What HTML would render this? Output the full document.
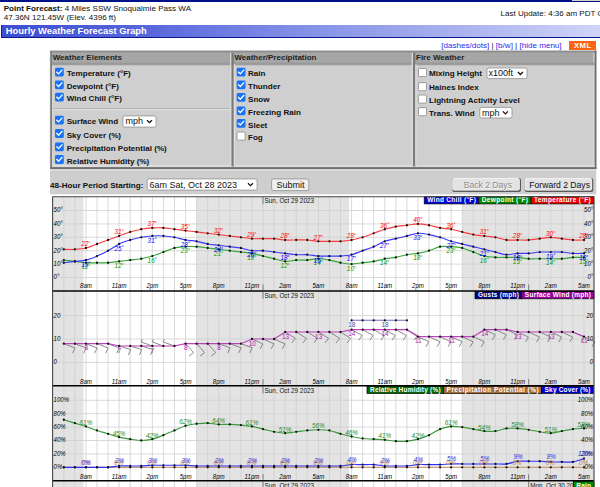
<!DOCTYPE html>
<html><head><meta charset="utf-8"><title>Hourly Weather Forecast Graph</title><style>
html,body{margin:0;padding:0;background:#fff}
body{width:600px;height:487px;overflow:hidden;position:relative;font-family:"Liberation Sans",sans-serif}
.r{position:absolute}
.t{position:absolute;z-index:2;white-space:nowrap;line-height:normal;font-family:"Liberation Sans",sans-serif}
.sel{position:absolute;background:#fff;border:0.8px solid #8a8a8a;border-radius:2px;box-sizing:border-box}
.btn{position:absolute;background:#efefef;border:0.8px solid #8a8a8a;border-radius:2px;box-sizing:border-box}
.btn2{position:absolute;background:#e4e4e4;border-top:1px solid #f6f6f6;border-left:1px solid #f6f6f6;border-right:1.3px solid #5a5a5a;border-bottom:1.5px solid #4a4a4a;border-radius:2px;box-sizing:border-box}
.g{position:absolute;left:0;top:0}
</style></head>
<body>
<div class="r" style="left:0;top:0;width:600px;height:1.8px;background:#001088"></div>
<div class="r" style="left:572px;top:0;width:28px;height:1px;background:#d6d2c8"></div>
<div class="t" style="left:3.7px;top:4.00px;font-size:8.09px;font-weight:normal;color:#111;"><b>Point Forecast:</b> 4 Miles SSW Snoqualmie Pass WA</div>
<div class="t" style="left:3.7px;top:13.00px;font-size:8.07px;font-weight:normal;color:#111;">47.36N 121.45W (Elev. 4396 ft)</div>
<div class="t" style="left:500.6px;top:9.00px;font-size:8px;font-weight:normal;color:#111;white-space:nowrap">Last Update: 4:36 am PDT Oct 28, 2023</div>
<div class="r" style="left:1.2px;top:24.5px;width:598.8px;height:12.6px;background:linear-gradient(90deg,#3d4dd2 0%,#5a68dc 25%,#8390e6 50%,#a8b0ee 75%,#d0d4f8 100%);border-left:1px solid #14209a;border-bottom:1px solid #0a1890"></div>
<div class="t" style="left:5.8px;top:25.00px;font-size:9.4px;font-weight:bold;color:#fff;">Hourly Weather Forecast Graph</div>
<div class="t" style="left:441.3px;top:41.00px;font-size:8.07px;font-weight:normal;color:#222;"><span style="color:#2a2af0">[dashes/dots]</span> | <span style="color:#2a2af0">[b/w]</span> | <span style="color:#2a2af0">[hide menu]</span></div>
<div class="r" style="left:569.2px;top:41px;width:26.8px;height:9.3px;background:#fb6410"></div>
<div class="t" style="left:574.0px;top:41.00px;font-size:7.6px;font-weight:bold;color:#fff;letter-spacing:0.55px">XML</div>
<div class="t" style="left:52.7px;top:53.00px;font-size:8px;font-weight:bold;color:#222;">Weather Elements</div>
<div class="t" style="left:234.4px;top:53.00px;font-size:8px;font-weight:bold;color:#222;">Weather/Precipitation</div>
<div class="t" style="left:416.0px;top:53.00px;font-size:8px;font-weight:bold;color:#222;">Fire Weather</div>

<div class="t" style="left:66.7px;top:69.00px;font-size:8.08px;font-weight:bold;color:#111;">Temperature (°F)</div>

<div class="t" style="left:66.7px;top:82.00px;font-size:8.08px;font-weight:bold;color:#111;">Dewpoint (°F)</div>

<div class="t" style="left:66.7px;top:94.00px;font-size:8.08px;font-weight:bold;color:#111;">Wind Chill (°F)</div>

<div class="t" style="left:66.7px;top:117.00px;font-size:8.08px;font-weight:bold;color:#111;">Surface Wind</div>

<div class="t" style="left:66.7px;top:131.00px;font-size:8.08px;font-weight:bold;color:#111;">Sky Cover (%)</div>

<div class="t" style="left:66.7px;top:144.00px;font-size:8.08px;font-weight:bold;color:#111;">Precipitation Potential (%)</div>

<div class="t" style="left:66.7px;top:157.00px;font-size:8.08px;font-weight:bold;color:#111;">Relative Humidity (%)</div>
<div class="t" style="left:125.5px;top:116.00px;font-size:9px;font-weight:normal;color:#111;">mph</div>

<div class="t" style="left:248.0px;top:69.00px;font-size:8.08px;font-weight:bold;color:#111;">Rain</div>

<div class="t" style="left:248.0px;top:82.00px;font-size:8.08px;font-weight:bold;color:#111;">Thunder</div>

<div class="t" style="left:248.0px;top:95.00px;font-size:8.08px;font-weight:bold;color:#111;">Snow</div>

<div class="t" style="left:248.0px;top:108.00px;font-size:8.08px;font-weight:bold;color:#111;">Freezing Rain</div>

<div class="t" style="left:248.0px;top:121.00px;font-size:8.08px;font-weight:bold;color:#111;">Sleet</div>

<div class="t" style="left:248.0px;top:133.00px;font-size:8.08px;font-weight:bold;color:#111;">Fog</div>

<div class="t" style="left:429.0px;top:69.00px;font-size:8.08px;font-weight:bold;color:#111;">Mixing Height</div>

<div class="t" style="left:429.0px;top:83.00px;font-size:8.08px;font-weight:bold;color:#111;">Haines Index</div>

<div class="t" style="left:429.0px;top:96.00px;font-size:8.08px;font-weight:bold;color:#111;">Lightning Activity Level</div>

<div class="t" style="left:429.0px;top:109.00px;font-size:8.08px;font-weight:bold;color:#111;">Trans. Wind</div>
<div class="t" style="left:488.6px;top:68.00px;font-size:9px;font-weight:normal;color:#111;">x100ft</div>
<div class="t" style="left:481.9px;top:108.00px;font-size:9px;font-weight:normal;color:#111;">mph</div>
<div class="t" style="left:50.0px;top:181.00px;font-size:8.08px;font-weight:bold;color:#111;">48-Hour Period Starting:</div>
<div class="t" style="left:149.5px;top:180.00px;font-size:9px;font-weight:normal;color:#111;">6am Sat, Oct 28 2023</div>
<div class="t" style="left:276.5px;top:180.00px;font-size:9px;font-weight:normal;color:#111;">Submit</div>
<div class="t" style="left:463.7px;top:180.00px;font-size:8.6px;font-weight:normal;color:#8a8a8a;text-shadow:0.5px 0.5px 0 #fafafa">Back 2 Days</div>
<div class="t" style="left:529.3px;top:180.00px;font-size:8.6px;font-weight:normal;color:#111;">Forward 2 Days</div>
<svg class="g" width="600" height="487" viewBox="0 0 600 487" style="position:absolute;left:0;top:0;z-index:1"><rect x="50.20" y="50.40" width="546.20" height="118.60" fill="#cfcfcf"/><rect x="52.00" y="52.70" width="542.60" height="9.80" fill="#a6a6a6"/><rect x="50.20" y="50.30" width="546.20" height="0.80" fill="#c4c4c4"/><rect x="50.30" y="51.00" width="546.00" height="1.70" fill="#8c8c8c"/><rect x="49.80" y="50.40" width="0.50" height="118.60" fill="#c8c8c8"/><rect x="50.30" y="51.00" width="1.70" height="118.00" fill="#7c7c7c"/><rect x="52.00" y="64.30" width="1.20" height="100.60" fill="#d8d8d8"/><rect x="593.40" y="52.70" width="1.20" height="112.20" fill="#dedede"/><rect x="594.60" y="50.60" width="1.80" height="118.40" fill="#6f6f6f"/><rect x="52.00" y="62.30" width="542.60" height="2.00" fill="#999999"/><rect x="52.00" y="64.30" width="542.60" height="0.90" fill="#8e8e8e"/><rect x="52.00" y="164.90" width="542.60" height="2.20" fill="#dcdcdc"/><rect x="50.30" y="167.10" width="546.10" height="1.90" fill="#707070"/><rect x="50.30" y="169.00" width="546.10" height="1.40" fill="#dadada"/><rect x="230.10" y="52.70" width="1.40" height="112.20" fill="#dadada"/><rect x="231.50" y="52.70" width="2.30" height="113.70" fill="#7a7a7a"/><rect x="233.80" y="64.30" width="1.20" height="100.60" fill="#dedede"/><rect x="411.60" y="52.70" width="1.40" height="112.20" fill="#dadada"/><rect x="413.00" y="52.70" width="2.30" height="113.70" fill="#7a7a7a"/><rect x="415.30" y="64.30" width="1.20" height="100.60" fill="#dedede"/><g transform="translate(55.00 67.70) scale(0.6769)"><rect x="0" y="0" width="13" height="13" rx="2.2" fill="#1a73f5"/><path d="M2.8 6.6 L5.3 9.1 L10.3 3.6" fill="none" stroke="#fff" stroke-width="2" stroke-linecap="square"/></g><g transform="translate(55.00 80.40) scale(0.6769)"><rect x="0" y="0" width="13" height="13" rx="2.2" fill="#1a73f5"/><path d="M2.8 6.6 L5.3 9.1 L10.3 3.6" fill="none" stroke="#fff" stroke-width="2" stroke-linecap="square"/></g><g transform="translate(55.00 92.70) scale(0.6769)"><rect x="0" y="0" width="13" height="13" rx="2.2" fill="#1a73f5"/><path d="M2.8 6.6 L5.3 9.1 L10.3 3.6" fill="none" stroke="#fff" stroke-width="2" stroke-linecap="square"/></g><rect x="53.00" y="108.00" width="177.00" height="0.90" fill="#a8a8a8"/><rect x="53.00" y="108.90" width="177.00" height="1.00" fill="#e4e4e4"/><g transform="translate(55.00 115.70) scale(0.6769)"><rect x="0" y="0" width="13" height="13" rx="2.2" fill="#1a73f5"/><path d="M2.8 6.6 L5.3 9.1 L10.3 3.6" fill="none" stroke="#fff" stroke-width="2" stroke-linecap="square"/></g><g transform="translate(55.00 129.10) scale(0.6769)"><rect x="0" y="0" width="13" height="13" rx="2.2" fill="#1a73f5"/><path d="M2.8 6.6 L5.3 9.1 L10.3 3.6" fill="none" stroke="#fff" stroke-width="2" stroke-linecap="square"/></g><g transform="translate(55.00 142.40) scale(0.6769)"><rect x="0" y="0" width="13" height="13" rx="2.2" fill="#1a73f5"/><path d="M2.8 6.6 L5.3 9.1 L10.3 3.6" fill="none" stroke="#fff" stroke-width="2" stroke-linecap="square"/></g><g transform="translate(55.00 155.10) scale(0.6769)"><rect x="0" y="0" width="13" height="13" rx="2.2" fill="#1a73f5"/><path d="M2.8 6.6 L5.3 9.1 L10.3 3.6" fill="none" stroke="#fff" stroke-width="2" stroke-linecap="square"/></g><rect x="122.90" y="115.90" width="33.20" height="11.20" rx="1.8" fill="#fff" stroke="#8f8f8f" stroke-width="0.8"/><path d="M147.00 120.20 L149.50 122.70 L152.00 120.20" fill="none" stroke="#111" stroke-width="1.25"/><g transform="translate(236.70 67.70) scale(0.6769)"><rect x="0" y="0" width="13" height="13" rx="2.2" fill="#1a73f5"/><path d="M2.8 6.6 L5.3 9.1 L10.3 3.6" fill="none" stroke="#fff" stroke-width="2" stroke-linecap="square"/></g><g transform="translate(236.70 80.40) scale(0.6769)"><rect x="0" y="0" width="13" height="13" rx="2.2" fill="#1a73f5"/><path d="M2.8 6.6 L5.3 9.1 L10.3 3.6" fill="none" stroke="#fff" stroke-width="2" stroke-linecap="square"/></g><g transform="translate(236.70 93.00) scale(0.6769)"><rect x="0" y="0" width="13" height="13" rx="2.2" fill="#1a73f5"/><path d="M2.8 6.6 L5.3 9.1 L10.3 3.6" fill="none" stroke="#fff" stroke-width="2" stroke-linecap="square"/></g><g transform="translate(236.70 106.40) scale(0.6769)"><rect x="0" y="0" width="13" height="13" rx="2.2" fill="#1a73f5"/><path d="M2.8 6.6 L5.3 9.1 L10.3 3.6" fill="none" stroke="#fff" stroke-width="2" stroke-linecap="square"/></g><g transform="translate(236.70 118.90) scale(0.6769)"><rect x="0" y="0" width="13" height="13" rx="2.2" fill="#1a73f5"/><path d="M2.8 6.6 L5.3 9.1 L10.3 3.6" fill="none" stroke="#fff" stroke-width="2" stroke-linecap="square"/></g><g transform="translate(236.70 131.70) scale(0.6769)"><rect x="0.5" y="0.5" width="12" height="12" rx="2" fill="#fff" stroke="#767676" stroke-width="1"/></g><g transform="translate(418.10 68.10) scale(0.6769)"><rect x="0.5" y="0.5" width="12" height="12" rx="2" fill="#fff" stroke="#767676" stroke-width="1"/></g><g transform="translate(418.10 82.30) scale(0.6769)"><rect x="0.5" y="0.5" width="12" height="12" rx="2" fill="#fff" stroke="#767676" stroke-width="1"/></g><g transform="translate(418.10 94.70) scale(0.6769)"><rect x="0.5" y="0.5" width="12" height="12" rx="2" fill="#fff" stroke="#767676" stroke-width="1"/></g><g transform="translate(418.10 107.30) scale(0.6769)"><rect x="0.5" y="0.5" width="12" height="12" rx="2" fill="#fff" stroke="#767676" stroke-width="1"/></g><rect x="487.00" y="68.00" width="40.00" height="10.60" rx="1.8" fill="#fff" stroke="#8f8f8f" stroke-width="0.8"/><path d="M517.90 72.00 L520.40 74.50 L522.90 72.00" fill="none" stroke="#111" stroke-width="1.25"/><rect x="479.80" y="107.40" width="32.20" height="10.60" rx="1.8" fill="#fff" stroke="#8f8f8f" stroke-width="0.8"/><path d="M502.90 111.40 L505.40 113.90 L507.90 111.40" fill="none" stroke="#111" stroke-width="1.25"/><rect x="50.00" y="170.30" width="546.30" height="24.00" fill="#cecece"/><rect x="147.20" y="178.90" width="109.90" height="11.20" rx="1.8" fill="#fff" stroke="#8f8f8f" stroke-width="0.8"/><path d="M248.00 183.20 L250.50 185.70 L253.00 183.20" fill="none" stroke="#111" stroke-width="1.25"/><rect x="271.60" y="178.90" width="37.20" height="11.70" rx="1.8" fill="#efefef" stroke="#8f8f8f" stroke-width="0.8"/><rect x="452.30" y="178.00" width="68.70" height="14.00" rx="2" fill="#5a5a5a"/><rect x="452.30" y="178.00" width="67.50" height="12.50" rx="2" fill="#f7f7f7"/><rect x="453.10" y="178.80" width="66.40" height="11.40" rx="1.5" fill="#e3e3e3"/><rect x="524.70" y="178.00" width="68.60" height="14.00" rx="2" fill="#5a5a5a"/><rect x="524.70" y="178.00" width="67.40" height="12.50" rx="2" fill="#f7f7f7"/><rect x="525.50" y="178.80" width="66.30" height="11.40" rx="1.5" fill="#e3e3e3"/></svg>
<svg class="g" width="600" height="487" viewBox="0 0 600 487">
<style>.ax{font:italic 6.4px "Liberation Sans",sans-serif;fill:#000}.tm{font:italic 6.7px "Liberation Sans",sans-serif;fill:#000}.dt{font:6.35px "Liberation Sans",sans-serif;fill:#111}.lg{font:bold 6.5px "Liberation Sans",sans-serif;fill:#fff}.vl{font:italic 6.4px "Liberation Sans",sans-serif}.dg{font-size:4.9px}</style>
<rect x="52.6" y="196.7" width="541.4" height="94.19999999999999" fill="#fff"/>
<rect x="52.73" y="196.7" width="30.77" height="94.19999999999999" fill="#e3e3e3"/>
<rect x="196.62" y="196.7" width="152.52" height="94.19999999999999" fill="#e3e3e3"/>
<rect x="462.25" y="196.7" width="131.75" height="94.19999999999999" fill="#e3e3e3"/>
<line x1="63.80" y1="196.7" x2="63.80" y2="290.9" stroke="#cfcfcf" stroke-width="0.8"/>
<line x1="74.87" y1="196.7" x2="74.87" y2="290.9" stroke="#cfcfcf" stroke-width="0.8"/>
<line x1="85.94" y1="196.7" x2="85.94" y2="290.9" stroke="#cfcfcf" stroke-width="0.8"/>
<line x1="97.00" y1="196.7" x2="97.00" y2="290.9" stroke="#cfcfcf" stroke-width="0.8"/>
<line x1="108.07" y1="196.7" x2="108.07" y2="290.9" stroke="#cfcfcf" stroke-width="0.8"/>
<line x1="119.14" y1="196.7" x2="119.14" y2="290.9" stroke="#cfcfcf" stroke-width="0.8"/>
<line x1="130.21" y1="196.7" x2="130.21" y2="290.9" stroke="#cfcfcf" stroke-width="0.8"/>
<line x1="141.28" y1="196.7" x2="141.28" y2="290.9" stroke="#cfcfcf" stroke-width="0.8"/>
<line x1="152.34" y1="196.7" x2="152.34" y2="290.9" stroke="#cfcfcf" stroke-width="0.8"/>
<line x1="163.41" y1="196.7" x2="163.41" y2="290.9" stroke="#cfcfcf" stroke-width="0.8"/>
<line x1="174.48" y1="196.7" x2="174.48" y2="290.9" stroke="#cfcfcf" stroke-width="0.8"/>
<line x1="185.55" y1="196.7" x2="185.55" y2="290.9" stroke="#cfcfcf" stroke-width="0.8"/>
<line x1="196.62" y1="196.7" x2="196.62" y2="290.9" stroke="#cfcfcf" stroke-width="0.8"/>
<line x1="207.68" y1="196.7" x2="207.68" y2="290.9" stroke="#cfcfcf" stroke-width="0.8"/>
<line x1="218.75" y1="196.7" x2="218.75" y2="290.9" stroke="#cfcfcf" stroke-width="0.8"/>
<line x1="229.82" y1="196.7" x2="229.82" y2="290.9" stroke="#cfcfcf" stroke-width="0.8"/>
<line x1="240.89" y1="196.7" x2="240.89" y2="290.9" stroke="#cfcfcf" stroke-width="0.8"/>
<line x1="251.96" y1="196.7" x2="251.96" y2="290.9" stroke="#cfcfcf" stroke-width="0.8"/>
<line x1="263.02" y1="196.7" x2="263.02" y2="290.9" stroke="#cfcfcf" stroke-width="0.8"/>
<line x1="274.09" y1="196.7" x2="274.09" y2="290.9" stroke="#cfcfcf" stroke-width="0.8"/>
<line x1="285.16" y1="196.7" x2="285.16" y2="290.9" stroke="#cfcfcf" stroke-width="0.8"/>
<line x1="296.23" y1="196.7" x2="296.23" y2="290.9" stroke="#cfcfcf" stroke-width="0.8"/>
<line x1="307.30" y1="196.7" x2="307.30" y2="290.9" stroke="#cfcfcf" stroke-width="0.8"/>
<line x1="318.36" y1="196.7" x2="318.36" y2="290.9" stroke="#cfcfcf" stroke-width="0.8"/>
<line x1="329.43" y1="196.7" x2="329.43" y2="290.9" stroke="#cfcfcf" stroke-width="0.8"/>
<line x1="340.50" y1="196.7" x2="340.50" y2="290.9" stroke="#cfcfcf" stroke-width="0.8"/>
<line x1="351.57" y1="196.7" x2="351.57" y2="290.9" stroke="#cfcfcf" stroke-width="0.8"/>
<line x1="362.64" y1="196.7" x2="362.64" y2="290.9" stroke="#cfcfcf" stroke-width="0.8"/>
<line x1="373.70" y1="196.7" x2="373.70" y2="290.9" stroke="#cfcfcf" stroke-width="0.8"/>
<line x1="384.77" y1="196.7" x2="384.77" y2="290.9" stroke="#cfcfcf" stroke-width="0.8"/>
<line x1="395.84" y1="196.7" x2="395.84" y2="290.9" stroke="#cfcfcf" stroke-width="0.8"/>
<line x1="406.91" y1="196.7" x2="406.91" y2="290.9" stroke="#cfcfcf" stroke-width="0.8"/>
<line x1="417.98" y1="196.7" x2="417.98" y2="290.9" stroke="#cfcfcf" stroke-width="0.8"/>
<line x1="429.04" y1="196.7" x2="429.04" y2="290.9" stroke="#cfcfcf" stroke-width="0.8"/>
<line x1="440.11" y1="196.7" x2="440.11" y2="290.9" stroke="#cfcfcf" stroke-width="0.8"/>
<line x1="451.18" y1="196.7" x2="451.18" y2="290.9" stroke="#cfcfcf" stroke-width="0.8"/>
<line x1="462.25" y1="196.7" x2="462.25" y2="290.9" stroke="#cfcfcf" stroke-width="0.8"/>
<line x1="473.32" y1="196.7" x2="473.32" y2="290.9" stroke="#cfcfcf" stroke-width="0.8"/>
<line x1="484.38" y1="196.7" x2="484.38" y2="290.9" stroke="#cfcfcf" stroke-width="0.8"/>
<line x1="495.45" y1="196.7" x2="495.45" y2="290.9" stroke="#cfcfcf" stroke-width="0.8"/>
<line x1="506.52" y1="196.7" x2="506.52" y2="290.9" stroke="#cfcfcf" stroke-width="0.8"/>
<line x1="517.59" y1="196.7" x2="517.59" y2="290.9" stroke="#cfcfcf" stroke-width="0.8"/>
<line x1="528.66" y1="196.7" x2="528.66" y2="290.9" stroke="#cfcfcf" stroke-width="0.8"/>
<line x1="539.72" y1="196.7" x2="539.72" y2="290.9" stroke="#cfcfcf" stroke-width="0.8"/>
<line x1="550.79" y1="196.7" x2="550.79" y2="290.9" stroke="#cfcfcf" stroke-width="0.8"/>
<line x1="561.86" y1="196.7" x2="561.86" y2="290.9" stroke="#cfcfcf" stroke-width="0.8"/>
<line x1="572.93" y1="196.7" x2="572.93" y2="290.9" stroke="#cfcfcf" stroke-width="0.8"/>
<line x1="584.00" y1="196.7" x2="584.00" y2="290.9" stroke="#cfcfcf" stroke-width="0.8"/>
<line x1="52.6" y1="210.50" x2="594.0" y2="210.50" stroke="#cfcfcf" stroke-width="0.8"/>
<line x1="52.6" y1="223.90" x2="594.0" y2="223.90" stroke="#cfcfcf" stroke-width="0.8"/>
<line x1="52.6" y1="237.30" x2="594.0" y2="237.30" stroke="#cfcfcf" stroke-width="0.8"/>
<line x1="52.6" y1="250.70" x2="594.0" y2="250.70" stroke="#cfcfcf" stroke-width="0.8"/>
<line x1="52.6" y1="264.10" x2="594.0" y2="264.10" stroke="#cfcfcf" stroke-width="0.8"/>
<line x1="52.6" y1="277.50" x2="594.0" y2="277.50" stroke="#cfcfcf" stroke-width="0.8"/>
<text transform="translate(53.60 212.40) scale(0.95 1)" class="ax">50°</text>
<text transform="translate(593.20 212.40) scale(0.95 1)" class="ax" text-anchor="end">50°</text>
<text transform="translate(53.60 225.80) scale(0.95 1)" class="ax">40°</text>
<text transform="translate(593.20 225.80) scale(0.95 1)" class="ax" text-anchor="end">40°</text>
<text transform="translate(53.60 239.20) scale(0.95 1)" class="ax">30°</text>
<text transform="translate(593.20 239.20) scale(0.95 1)" class="ax" text-anchor="end">30°</text>
<text transform="translate(53.60 252.60) scale(0.95 1)" class="ax">20°</text>
<text transform="translate(593.20 252.60) scale(0.95 1)" class="ax" text-anchor="end">20°</text>
<text transform="translate(53.60 266.00) scale(0.95 1)" class="ax">10°</text>
<text transform="translate(593.20 266.00) scale(0.95 1)" class="ax" text-anchor="end">10°</text>
<text transform="translate(53.60 279.40) scale(0.95 1)" class="ax">0°</text>
<text transform="translate(593.20 279.40) scale(0.95 1)" class="ax" text-anchor="end">0°</text>
<text transform="translate(85.94 288.40) scale(0.91 1)" class="tm" text-anchor="middle">8am</text>
<text transform="translate(119.14 288.40) scale(0.91 1)" class="tm" text-anchor="middle">11am</text>
<text transform="translate(152.34 288.40) scale(0.91 1)" class="tm" text-anchor="middle">2pm</text>
<text transform="translate(185.55 288.40) scale(0.91 1)" class="tm" text-anchor="middle">5pm</text>
<text transform="translate(218.75 288.40) scale(0.91 1)" class="tm" text-anchor="middle">8pm</text>
<text transform="translate(251.96 288.40) scale(0.91 1)" class="tm" text-anchor="middle">11pm</text>
<text transform="translate(285.16 288.40) scale(0.91 1)" class="tm" text-anchor="middle">2am</text>
<text transform="translate(318.36 288.40) scale(0.91 1)" class="tm" text-anchor="middle">5am</text>
<text transform="translate(351.57 288.40) scale(0.91 1)" class="tm" text-anchor="middle">8am</text>
<text transform="translate(384.77 288.40) scale(0.91 1)" class="tm" text-anchor="middle">11am</text>
<text transform="translate(417.98 288.40) scale(0.91 1)" class="tm" text-anchor="middle">2pm</text>
<text transform="translate(451.18 288.40) scale(0.91 1)" class="tm" text-anchor="middle">5pm</text>
<text transform="translate(484.38 288.40) scale(0.91 1)" class="tm" text-anchor="middle">8pm</text>
<text transform="translate(517.59 288.40) scale(0.91 1)" class="tm" text-anchor="middle">11pm</text>
<text transform="translate(550.79 288.40) scale(0.91 1)" class="tm" text-anchor="middle">2am</text>
<text transform="translate(584.00 288.40) scale(0.91 1)" class="tm" text-anchor="middle">5am</text>
<line x1="263.02" y1="284.40" x2="263.02" y2="289.9" stroke="#555" stroke-width="0.7"/>
<line x1="528.66" y1="284.40" x2="528.66" y2="289.9" stroke="#555" stroke-width="0.7"/>
<line x1="263.02" y1="197.10" x2="263.02" y2="204.20" stroke="#555" stroke-width="0.7"/><text x="264.62" y="203.30" class="dt">Sun, Oct 29 2023</text>
<rect x="52.6" y="291.3" width="541.4" height="94.39999999999998" fill="#fff"/>
<rect x="52.73" y="291.3" width="30.77" height="94.39999999999998" fill="#e3e3e3"/>
<rect x="196.62" y="291.3" width="152.52" height="94.39999999999998" fill="#e3e3e3"/>
<rect x="462.25" y="291.3" width="131.75" height="94.39999999999998" fill="#e3e3e3"/>
<line x1="63.80" y1="291.3" x2="63.80" y2="385.7" stroke="#cfcfcf" stroke-width="0.8"/>
<line x1="74.87" y1="291.3" x2="74.87" y2="385.7" stroke="#cfcfcf" stroke-width="0.8"/>
<line x1="85.94" y1="291.3" x2="85.94" y2="385.7" stroke="#cfcfcf" stroke-width="0.8"/>
<line x1="97.00" y1="291.3" x2="97.00" y2="385.7" stroke="#cfcfcf" stroke-width="0.8"/>
<line x1="108.07" y1="291.3" x2="108.07" y2="385.7" stroke="#cfcfcf" stroke-width="0.8"/>
<line x1="119.14" y1="291.3" x2="119.14" y2="385.7" stroke="#cfcfcf" stroke-width="0.8"/>
<line x1="130.21" y1="291.3" x2="130.21" y2="385.7" stroke="#cfcfcf" stroke-width="0.8"/>
<line x1="141.28" y1="291.3" x2="141.28" y2="385.7" stroke="#cfcfcf" stroke-width="0.8"/>
<line x1="152.34" y1="291.3" x2="152.34" y2="385.7" stroke="#cfcfcf" stroke-width="0.8"/>
<line x1="163.41" y1="291.3" x2="163.41" y2="385.7" stroke="#cfcfcf" stroke-width="0.8"/>
<line x1="174.48" y1="291.3" x2="174.48" y2="385.7" stroke="#cfcfcf" stroke-width="0.8"/>
<line x1="185.55" y1="291.3" x2="185.55" y2="385.7" stroke="#cfcfcf" stroke-width="0.8"/>
<line x1="196.62" y1="291.3" x2="196.62" y2="385.7" stroke="#cfcfcf" stroke-width="0.8"/>
<line x1="207.68" y1="291.3" x2="207.68" y2="385.7" stroke="#cfcfcf" stroke-width="0.8"/>
<line x1="218.75" y1="291.3" x2="218.75" y2="385.7" stroke="#cfcfcf" stroke-width="0.8"/>
<line x1="229.82" y1="291.3" x2="229.82" y2="385.7" stroke="#cfcfcf" stroke-width="0.8"/>
<line x1="240.89" y1="291.3" x2="240.89" y2="385.7" stroke="#cfcfcf" stroke-width="0.8"/>
<line x1="251.96" y1="291.3" x2="251.96" y2="385.7" stroke="#cfcfcf" stroke-width="0.8"/>
<line x1="263.02" y1="291.3" x2="263.02" y2="385.7" stroke="#cfcfcf" stroke-width="0.8"/>
<line x1="274.09" y1="291.3" x2="274.09" y2="385.7" stroke="#cfcfcf" stroke-width="0.8"/>
<line x1="285.16" y1="291.3" x2="285.16" y2="385.7" stroke="#cfcfcf" stroke-width="0.8"/>
<line x1="296.23" y1="291.3" x2="296.23" y2="385.7" stroke="#cfcfcf" stroke-width="0.8"/>
<line x1="307.30" y1="291.3" x2="307.30" y2="385.7" stroke="#cfcfcf" stroke-width="0.8"/>
<line x1="318.36" y1="291.3" x2="318.36" y2="385.7" stroke="#cfcfcf" stroke-width="0.8"/>
<line x1="329.43" y1="291.3" x2="329.43" y2="385.7" stroke="#cfcfcf" stroke-width="0.8"/>
<line x1="340.50" y1="291.3" x2="340.50" y2="385.7" stroke="#cfcfcf" stroke-width="0.8"/>
<line x1="351.57" y1="291.3" x2="351.57" y2="385.7" stroke="#cfcfcf" stroke-width="0.8"/>
<line x1="362.64" y1="291.3" x2="362.64" y2="385.7" stroke="#cfcfcf" stroke-width="0.8"/>
<line x1="373.70" y1="291.3" x2="373.70" y2="385.7" stroke="#cfcfcf" stroke-width="0.8"/>
<line x1="384.77" y1="291.3" x2="384.77" y2="385.7" stroke="#cfcfcf" stroke-width="0.8"/>
<line x1="395.84" y1="291.3" x2="395.84" y2="385.7" stroke="#cfcfcf" stroke-width="0.8"/>
<line x1="406.91" y1="291.3" x2="406.91" y2="385.7" stroke="#cfcfcf" stroke-width="0.8"/>
<line x1="417.98" y1="291.3" x2="417.98" y2="385.7" stroke="#cfcfcf" stroke-width="0.8"/>
<line x1="429.04" y1="291.3" x2="429.04" y2="385.7" stroke="#cfcfcf" stroke-width="0.8"/>
<line x1="440.11" y1="291.3" x2="440.11" y2="385.7" stroke="#cfcfcf" stroke-width="0.8"/>
<line x1="451.18" y1="291.3" x2="451.18" y2="385.7" stroke="#cfcfcf" stroke-width="0.8"/>
<line x1="462.25" y1="291.3" x2="462.25" y2="385.7" stroke="#cfcfcf" stroke-width="0.8"/>
<line x1="473.32" y1="291.3" x2="473.32" y2="385.7" stroke="#cfcfcf" stroke-width="0.8"/>
<line x1="484.38" y1="291.3" x2="484.38" y2="385.7" stroke="#cfcfcf" stroke-width="0.8"/>
<line x1="495.45" y1="291.3" x2="495.45" y2="385.7" stroke="#cfcfcf" stroke-width="0.8"/>
<line x1="506.52" y1="291.3" x2="506.52" y2="385.7" stroke="#cfcfcf" stroke-width="0.8"/>
<line x1="517.59" y1="291.3" x2="517.59" y2="385.7" stroke="#cfcfcf" stroke-width="0.8"/>
<line x1="528.66" y1="291.3" x2="528.66" y2="385.7" stroke="#cfcfcf" stroke-width="0.8"/>
<line x1="539.72" y1="291.3" x2="539.72" y2="385.7" stroke="#cfcfcf" stroke-width="0.8"/>
<line x1="550.79" y1="291.3" x2="550.79" y2="385.7" stroke="#cfcfcf" stroke-width="0.8"/>
<line x1="561.86" y1="291.3" x2="561.86" y2="385.7" stroke="#cfcfcf" stroke-width="0.8"/>
<line x1="572.93" y1="291.3" x2="572.93" y2="385.7" stroke="#cfcfcf" stroke-width="0.8"/>
<line x1="584.00" y1="291.3" x2="584.00" y2="385.7" stroke="#cfcfcf" stroke-width="0.8"/>
<line x1="52.6" y1="315.60" x2="594.0" y2="315.60" stroke="#cfcfcf" stroke-width="0.8"/>
<line x1="52.6" y1="339.00" x2="594.0" y2="339.00" stroke="#cfcfcf" stroke-width="0.8"/>
<line x1="52.6" y1="362.40" x2="594.0" y2="362.40" stroke="#cfcfcf" stroke-width="0.8"/>
<text transform="translate(53.60 317.50) scale(0.95 1)" class="ax">20</text>
<text transform="translate(593.20 317.50) scale(0.95 1)" class="ax" text-anchor="end">20</text>
<text transform="translate(53.60 340.90) scale(0.95 1)" class="ax">10</text>
<text transform="translate(593.20 340.90) scale(0.95 1)" class="ax" text-anchor="end">10</text>
<text transform="translate(53.60 364.30) scale(0.95 1)" class="ax">0</text>
<text transform="translate(593.20 364.30) scale(0.95 1)" class="ax" text-anchor="end">0</text>
<text transform="translate(85.94 383.60) scale(0.91 1)" class="tm" text-anchor="middle">8am</text>
<text transform="translate(119.14 383.60) scale(0.91 1)" class="tm" text-anchor="middle">11am</text>
<text transform="translate(152.34 383.60) scale(0.91 1)" class="tm" text-anchor="middle">2pm</text>
<text transform="translate(185.55 383.60) scale(0.91 1)" class="tm" text-anchor="middle">5pm</text>
<text transform="translate(218.75 383.60) scale(0.91 1)" class="tm" text-anchor="middle">8pm</text>
<text transform="translate(251.96 383.60) scale(0.91 1)" class="tm" text-anchor="middle">11pm</text>
<text transform="translate(285.16 383.60) scale(0.91 1)" class="tm" text-anchor="middle">2am</text>
<text transform="translate(318.36 383.60) scale(0.91 1)" class="tm" text-anchor="middle">5am</text>
<text transform="translate(351.57 383.60) scale(0.91 1)" class="tm" text-anchor="middle">8am</text>
<text transform="translate(384.77 383.60) scale(0.91 1)" class="tm" text-anchor="middle">11am</text>
<text transform="translate(417.98 383.60) scale(0.91 1)" class="tm" text-anchor="middle">2pm</text>
<text transform="translate(451.18 383.60) scale(0.91 1)" class="tm" text-anchor="middle">5pm</text>
<text transform="translate(484.38 383.60) scale(0.91 1)" class="tm" text-anchor="middle">8pm</text>
<text transform="translate(517.59 383.60) scale(0.91 1)" class="tm" text-anchor="middle">11pm</text>
<text transform="translate(550.79 383.60) scale(0.91 1)" class="tm" text-anchor="middle">2am</text>
<text transform="translate(584.00 383.60) scale(0.91 1)" class="tm" text-anchor="middle">5am</text>
<line x1="263.02" y1="379.20" x2="263.02" y2="384.7" stroke="#555" stroke-width="0.7"/>
<line x1="528.66" y1="379.20" x2="528.66" y2="384.7" stroke="#555" stroke-width="0.7"/>
<line x1="263.02" y1="291.70" x2="263.02" y2="298.80" stroke="#555" stroke-width="0.7"/><text x="264.62" y="297.90" class="dt">Sun, Oct 29 2023</text>
<rect x="52.6" y="386.1" width="541.4" height="94.59999999999997" fill="#fff"/>
<rect x="52.73" y="386.1" width="30.77" height="94.59999999999997" fill="#e3e3e3"/>
<rect x="196.62" y="386.1" width="152.52" height="94.59999999999997" fill="#e3e3e3"/>
<rect x="462.25" y="386.1" width="131.75" height="94.59999999999997" fill="#e3e3e3"/>
<line x1="63.80" y1="386.1" x2="63.80" y2="480.7" stroke="#cfcfcf" stroke-width="0.8"/>
<line x1="74.87" y1="386.1" x2="74.87" y2="480.7" stroke="#cfcfcf" stroke-width="0.8"/>
<line x1="85.94" y1="386.1" x2="85.94" y2="480.7" stroke="#cfcfcf" stroke-width="0.8"/>
<line x1="97.00" y1="386.1" x2="97.00" y2="480.7" stroke="#cfcfcf" stroke-width="0.8"/>
<line x1="108.07" y1="386.1" x2="108.07" y2="480.7" stroke="#cfcfcf" stroke-width="0.8"/>
<line x1="119.14" y1="386.1" x2="119.14" y2="480.7" stroke="#cfcfcf" stroke-width="0.8"/>
<line x1="130.21" y1="386.1" x2="130.21" y2="480.7" stroke="#cfcfcf" stroke-width="0.8"/>
<line x1="141.28" y1="386.1" x2="141.28" y2="480.7" stroke="#cfcfcf" stroke-width="0.8"/>
<line x1="152.34" y1="386.1" x2="152.34" y2="480.7" stroke="#cfcfcf" stroke-width="0.8"/>
<line x1="163.41" y1="386.1" x2="163.41" y2="480.7" stroke="#cfcfcf" stroke-width="0.8"/>
<line x1="174.48" y1="386.1" x2="174.48" y2="480.7" stroke="#cfcfcf" stroke-width="0.8"/>
<line x1="185.55" y1="386.1" x2="185.55" y2="480.7" stroke="#cfcfcf" stroke-width="0.8"/>
<line x1="196.62" y1="386.1" x2="196.62" y2="480.7" stroke="#cfcfcf" stroke-width="0.8"/>
<line x1="207.68" y1="386.1" x2="207.68" y2="480.7" stroke="#cfcfcf" stroke-width="0.8"/>
<line x1="218.75" y1="386.1" x2="218.75" y2="480.7" stroke="#cfcfcf" stroke-width="0.8"/>
<line x1="229.82" y1="386.1" x2="229.82" y2="480.7" stroke="#cfcfcf" stroke-width="0.8"/>
<line x1="240.89" y1="386.1" x2="240.89" y2="480.7" stroke="#cfcfcf" stroke-width="0.8"/>
<line x1="251.96" y1="386.1" x2="251.96" y2="480.7" stroke="#cfcfcf" stroke-width="0.8"/>
<line x1="263.02" y1="386.1" x2="263.02" y2="480.7" stroke="#cfcfcf" stroke-width="0.8"/>
<line x1="274.09" y1="386.1" x2="274.09" y2="480.7" stroke="#cfcfcf" stroke-width="0.8"/>
<line x1="285.16" y1="386.1" x2="285.16" y2="480.7" stroke="#cfcfcf" stroke-width="0.8"/>
<line x1="296.23" y1="386.1" x2="296.23" y2="480.7" stroke="#cfcfcf" stroke-width="0.8"/>
<line x1="307.30" y1="386.1" x2="307.30" y2="480.7" stroke="#cfcfcf" stroke-width="0.8"/>
<line x1="318.36" y1="386.1" x2="318.36" y2="480.7" stroke="#cfcfcf" stroke-width="0.8"/>
<line x1="329.43" y1="386.1" x2="329.43" y2="480.7" stroke="#cfcfcf" stroke-width="0.8"/>
<line x1="340.50" y1="386.1" x2="340.50" y2="480.7" stroke="#cfcfcf" stroke-width="0.8"/>
<line x1="351.57" y1="386.1" x2="351.57" y2="480.7" stroke="#cfcfcf" stroke-width="0.8"/>
<line x1="362.64" y1="386.1" x2="362.64" y2="480.7" stroke="#cfcfcf" stroke-width="0.8"/>
<line x1="373.70" y1="386.1" x2="373.70" y2="480.7" stroke="#cfcfcf" stroke-width="0.8"/>
<line x1="384.77" y1="386.1" x2="384.77" y2="480.7" stroke="#cfcfcf" stroke-width="0.8"/>
<line x1="395.84" y1="386.1" x2="395.84" y2="480.7" stroke="#cfcfcf" stroke-width="0.8"/>
<line x1="406.91" y1="386.1" x2="406.91" y2="480.7" stroke="#cfcfcf" stroke-width="0.8"/>
<line x1="417.98" y1="386.1" x2="417.98" y2="480.7" stroke="#cfcfcf" stroke-width="0.8"/>
<line x1="429.04" y1="386.1" x2="429.04" y2="480.7" stroke="#cfcfcf" stroke-width="0.8"/>
<line x1="440.11" y1="386.1" x2="440.11" y2="480.7" stroke="#cfcfcf" stroke-width="0.8"/>
<line x1="451.18" y1="386.1" x2="451.18" y2="480.7" stroke="#cfcfcf" stroke-width="0.8"/>
<line x1="462.25" y1="386.1" x2="462.25" y2="480.7" stroke="#cfcfcf" stroke-width="0.8"/>
<line x1="473.32" y1="386.1" x2="473.32" y2="480.7" stroke="#cfcfcf" stroke-width="0.8"/>
<line x1="484.38" y1="386.1" x2="484.38" y2="480.7" stroke="#cfcfcf" stroke-width="0.8"/>
<line x1="495.45" y1="386.1" x2="495.45" y2="480.7" stroke="#cfcfcf" stroke-width="0.8"/>
<line x1="506.52" y1="386.1" x2="506.52" y2="480.7" stroke="#cfcfcf" stroke-width="0.8"/>
<line x1="517.59" y1="386.1" x2="517.59" y2="480.7" stroke="#cfcfcf" stroke-width="0.8"/>
<line x1="528.66" y1="386.1" x2="528.66" y2="480.7" stroke="#cfcfcf" stroke-width="0.8"/>
<line x1="539.72" y1="386.1" x2="539.72" y2="480.7" stroke="#cfcfcf" stroke-width="0.8"/>
<line x1="550.79" y1="386.1" x2="550.79" y2="480.7" stroke="#cfcfcf" stroke-width="0.8"/>
<line x1="561.86" y1="386.1" x2="561.86" y2="480.7" stroke="#cfcfcf" stroke-width="0.8"/>
<line x1="572.93" y1="386.1" x2="572.93" y2="480.7" stroke="#cfcfcf" stroke-width="0.8"/>
<line x1="584.00" y1="386.1" x2="584.00" y2="480.7" stroke="#cfcfcf" stroke-width="0.8"/>
<line x1="52.6" y1="400.30" x2="594.0" y2="400.30" stroke="#cfcfcf" stroke-width="0.8"/>
<line x1="52.6" y1="413.70" x2="594.0" y2="413.70" stroke="#cfcfcf" stroke-width="0.8"/>
<line x1="52.6" y1="427.10" x2="594.0" y2="427.10" stroke="#cfcfcf" stroke-width="0.8"/>
<line x1="52.6" y1="440.50" x2="594.0" y2="440.50" stroke="#cfcfcf" stroke-width="0.8"/>
<line x1="52.6" y1="453.90" x2="594.0" y2="453.90" stroke="#cfcfcf" stroke-width="0.8"/>
<line x1="52.6" y1="467.30" x2="594.0" y2="467.30" stroke="#cfcfcf" stroke-width="0.8"/>
<text transform="translate(53.60 402.20) scale(0.95 1)" class="ax">100%</text>
<text transform="translate(593.20 402.20) scale(0.95 1)" class="ax" text-anchor="end">100%</text>
<text transform="translate(53.60 415.60) scale(0.95 1)" class="ax">80%</text>
<text transform="translate(593.20 415.60) scale(0.95 1)" class="ax" text-anchor="end">80%</text>
<text transform="translate(53.60 429.00) scale(0.95 1)" class="ax">60%</text>
<text transform="translate(593.20 429.00) scale(0.95 1)" class="ax" text-anchor="end">60%</text>
<text transform="translate(53.60 442.40) scale(0.95 1)" class="ax">40%</text>
<text transform="translate(593.20 442.40) scale(0.95 1)" class="ax" text-anchor="end">40%</text>
<text transform="translate(53.60 455.80) scale(0.95 1)" class="ax">20%</text>
<text transform="translate(593.20 455.80) scale(0.95 1)" class="ax" text-anchor="end">20%</text>
<text transform="translate(53.60 469.20) scale(0.95 1)" class="ax">0%</text>
<text transform="translate(593.20 469.20) scale(0.95 1)" class="ax" text-anchor="end">0%</text>
<text transform="translate(85.94 478.90) scale(0.91 1)" class="tm" text-anchor="middle">8am</text>
<text transform="translate(119.14 478.90) scale(0.91 1)" class="tm" text-anchor="middle">11am</text>
<text transform="translate(152.34 478.90) scale(0.91 1)" class="tm" text-anchor="middle">2pm</text>
<text transform="translate(185.55 478.90) scale(0.91 1)" class="tm" text-anchor="middle">5pm</text>
<text transform="translate(218.75 478.90) scale(0.91 1)" class="tm" text-anchor="middle">8pm</text>
<text transform="translate(251.96 478.90) scale(0.91 1)" class="tm" text-anchor="middle">11pm</text>
<text transform="translate(285.16 478.90) scale(0.91 1)" class="tm" text-anchor="middle">2am</text>
<text transform="translate(318.36 478.90) scale(0.91 1)" class="tm" text-anchor="middle">5am</text>
<text transform="translate(351.57 478.90) scale(0.91 1)" class="tm" text-anchor="middle">8am</text>
<text transform="translate(384.77 478.90) scale(0.91 1)" class="tm" text-anchor="middle">11am</text>
<text transform="translate(417.98 478.90) scale(0.91 1)" class="tm" text-anchor="middle">2pm</text>
<text transform="translate(451.18 478.90) scale(0.91 1)" class="tm" text-anchor="middle">5pm</text>
<text transform="translate(484.38 478.90) scale(0.91 1)" class="tm" text-anchor="middle">8pm</text>
<text transform="translate(517.59 478.90) scale(0.91 1)" class="tm" text-anchor="middle">11pm</text>
<text transform="translate(550.79 478.90) scale(0.91 1)" class="tm" text-anchor="middle">2am</text>
<text transform="translate(584.00 478.90) scale(0.91 1)" class="tm" text-anchor="middle">5am</text>
<line x1="263.02" y1="474.20" x2="263.02" y2="479.7" stroke="#555" stroke-width="0.7"/>
<line x1="528.66" y1="474.20" x2="528.66" y2="479.7" stroke="#555" stroke-width="0.7"/>
<line x1="263.02" y1="386.50" x2="263.02" y2="393.60" stroke="#555" stroke-width="0.7"/><text x="264.62" y="392.70" class="dt">Sun, Oct 29 2023</text>
<rect x="52.6" y="481.1" width="541.4" height="10" fill="#fff"/>
<rect x="52.73" y="481.1" width="30.77" height="10" fill="#e3e3e3"/>
<rect x="196.62" y="481.1" width="152.52" height="10" fill="#e3e3e3"/>
<rect x="462.25" y="481.1" width="131.75" height="10" fill="#e3e3e3"/>
<line x1="63.80" y1="481.1" x2="63.80" y2="487" stroke="#cfcfcf" stroke-width="0.8"/>
<line x1="74.87" y1="481.1" x2="74.87" y2="487" stroke="#cfcfcf" stroke-width="0.8"/>
<line x1="85.94" y1="481.1" x2="85.94" y2="487" stroke="#cfcfcf" stroke-width="0.8"/>
<line x1="97.00" y1="481.1" x2="97.00" y2="487" stroke="#cfcfcf" stroke-width="0.8"/>
<line x1="108.07" y1="481.1" x2="108.07" y2="487" stroke="#cfcfcf" stroke-width="0.8"/>
<line x1="119.14" y1="481.1" x2="119.14" y2="487" stroke="#cfcfcf" stroke-width="0.8"/>
<line x1="130.21" y1="481.1" x2="130.21" y2="487" stroke="#cfcfcf" stroke-width="0.8"/>
<line x1="141.28" y1="481.1" x2="141.28" y2="487" stroke="#cfcfcf" stroke-width="0.8"/>
<line x1="152.34" y1="481.1" x2="152.34" y2="487" stroke="#cfcfcf" stroke-width="0.8"/>
<line x1="163.41" y1="481.1" x2="163.41" y2="487" stroke="#cfcfcf" stroke-width="0.8"/>
<line x1="174.48" y1="481.1" x2="174.48" y2="487" stroke="#cfcfcf" stroke-width="0.8"/>
<line x1="185.55" y1="481.1" x2="185.55" y2="487" stroke="#cfcfcf" stroke-width="0.8"/>
<line x1="196.62" y1="481.1" x2="196.62" y2="487" stroke="#cfcfcf" stroke-width="0.8"/>
<line x1="207.68" y1="481.1" x2="207.68" y2="487" stroke="#cfcfcf" stroke-width="0.8"/>
<line x1="218.75" y1="481.1" x2="218.75" y2="487" stroke="#cfcfcf" stroke-width="0.8"/>
<line x1="229.82" y1="481.1" x2="229.82" y2="487" stroke="#cfcfcf" stroke-width="0.8"/>
<line x1="240.89" y1="481.1" x2="240.89" y2="487" stroke="#cfcfcf" stroke-width="0.8"/>
<line x1="251.96" y1="481.1" x2="251.96" y2="487" stroke="#cfcfcf" stroke-width="0.8"/>
<line x1="263.02" y1="481.1" x2="263.02" y2="487" stroke="#cfcfcf" stroke-width="0.8"/>
<line x1="274.09" y1="481.1" x2="274.09" y2="487" stroke="#cfcfcf" stroke-width="0.8"/>
<line x1="285.16" y1="481.1" x2="285.16" y2="487" stroke="#cfcfcf" stroke-width="0.8"/>
<line x1="296.23" y1="481.1" x2="296.23" y2="487" stroke="#cfcfcf" stroke-width="0.8"/>
<line x1="307.30" y1="481.1" x2="307.30" y2="487" stroke="#cfcfcf" stroke-width="0.8"/>
<line x1="318.36" y1="481.1" x2="318.36" y2="487" stroke="#cfcfcf" stroke-width="0.8"/>
<line x1="329.43" y1="481.1" x2="329.43" y2="487" stroke="#cfcfcf" stroke-width="0.8"/>
<line x1="340.50" y1="481.1" x2="340.50" y2="487" stroke="#cfcfcf" stroke-width="0.8"/>
<line x1="351.57" y1="481.1" x2="351.57" y2="487" stroke="#cfcfcf" stroke-width="0.8"/>
<line x1="362.64" y1="481.1" x2="362.64" y2="487" stroke="#cfcfcf" stroke-width="0.8"/>
<line x1="373.70" y1="481.1" x2="373.70" y2="487" stroke="#cfcfcf" stroke-width="0.8"/>
<line x1="384.77" y1="481.1" x2="384.77" y2="487" stroke="#cfcfcf" stroke-width="0.8"/>
<line x1="395.84" y1="481.1" x2="395.84" y2="487" stroke="#cfcfcf" stroke-width="0.8"/>
<line x1="406.91" y1="481.1" x2="406.91" y2="487" stroke="#cfcfcf" stroke-width="0.8"/>
<line x1="417.98" y1="481.1" x2="417.98" y2="487" stroke="#cfcfcf" stroke-width="0.8"/>
<line x1="429.04" y1="481.1" x2="429.04" y2="487" stroke="#cfcfcf" stroke-width="0.8"/>
<line x1="440.11" y1="481.1" x2="440.11" y2="487" stroke="#cfcfcf" stroke-width="0.8"/>
<line x1="451.18" y1="481.1" x2="451.18" y2="487" stroke="#cfcfcf" stroke-width="0.8"/>
<line x1="462.25" y1="481.1" x2="462.25" y2="487" stroke="#cfcfcf" stroke-width="0.8"/>
<line x1="473.32" y1="481.1" x2="473.32" y2="487" stroke="#cfcfcf" stroke-width="0.8"/>
<line x1="484.38" y1="481.1" x2="484.38" y2="487" stroke="#cfcfcf" stroke-width="0.8"/>
<line x1="495.45" y1="481.1" x2="495.45" y2="487" stroke="#cfcfcf" stroke-width="0.8"/>
<line x1="506.52" y1="481.1" x2="506.52" y2="487" stroke="#cfcfcf" stroke-width="0.8"/>
<line x1="517.59" y1="481.1" x2="517.59" y2="487" stroke="#cfcfcf" stroke-width="0.8"/>
<line x1="528.66" y1="481.1" x2="528.66" y2="487" stroke="#cfcfcf" stroke-width="0.8"/>
<line x1="539.72" y1="481.1" x2="539.72" y2="487" stroke="#cfcfcf" stroke-width="0.8"/>
<line x1="550.79" y1="481.1" x2="550.79" y2="487" stroke="#cfcfcf" stroke-width="0.8"/>
<line x1="561.86" y1="481.1" x2="561.86" y2="487" stroke="#cfcfcf" stroke-width="0.8"/>
<line x1="572.93" y1="481.1" x2="572.93" y2="487" stroke="#cfcfcf" stroke-width="0.8"/>
<line x1="584.00" y1="481.1" x2="584.00" y2="487" stroke="#cfcfcf" stroke-width="0.8"/>
<line x1="263.02" y1="481.50" x2="263.02" y2="488.60" stroke="#555" stroke-width="0.7"/><text x="264.62" y="487.70" class="dt">Sun, Oct 29 2023</text>
<line x1="528.66" y1="481.50" x2="528.66" y2="488.60" stroke="#555" stroke-width="0.7"/><text x="530.26" y="487.70" class="dt">Mon, Oct 30 2023</text>
<path d="M63.80 249.36 C65.64 249.36 71.18 249.58 74.87 249.36 C78.56 249.14 82.25 248.91 85.94 248.02 C89.63 247.13 93.31 245.34 97.00 244.00 C100.69 242.66 104.38 241.32 108.07 239.98 C111.76 238.64 115.45 237.30 119.14 235.96 C122.83 234.62 126.52 233.06 130.21 231.94 C133.90 230.82 137.59 229.93 141.28 229.26 C144.97 228.59 148.65 228.14 152.34 227.92 C156.03 227.70 159.72 227.70 163.41 227.92 C167.10 228.14 170.79 228.81 174.48 229.26 C178.17 229.71 181.86 230.15 185.55 230.60 C189.24 231.05 192.93 231.49 196.62 231.94 C200.31 232.39 203.99 232.83 207.68 233.28 C211.37 233.73 215.06 234.17 218.75 234.62 C222.44 235.07 226.13 235.51 229.82 235.96 C233.51 236.41 237.20 236.85 240.89 237.30 C244.58 237.75 248.27 238.42 251.96 238.64 C255.65 238.86 259.33 238.64 263.02 238.64 C266.71 238.64 270.40 238.42 274.09 238.64 C277.78 238.86 281.47 239.76 285.16 239.98 C288.85 240.20 292.54 239.98 296.23 239.98 C299.92 239.98 303.61 239.76 307.30 239.98 C310.99 240.20 314.67 241.10 318.36 241.32 C322.05 241.54 325.74 241.32 329.43 241.32 C333.12 241.32 336.81 241.54 340.50 241.32 C344.19 241.10 347.88 240.65 351.57 239.98 C355.26 239.31 358.95 238.42 362.64 237.30 C366.33 236.18 370.01 234.62 373.70 233.28 C377.39 231.94 381.08 230.38 384.77 229.26 C388.46 228.14 392.15 227.25 395.84 226.58 C399.53 225.91 403.22 225.69 406.91 225.24 C410.60 224.79 414.29 223.90 417.98 223.90 C421.67 223.90 425.35 224.57 429.04 225.24 C432.73 225.91 436.42 227.25 440.11 227.92 C443.80 228.59 447.49 228.59 451.18 229.26 C454.87 229.93 458.56 231.05 462.25 231.94 C465.94 232.83 469.63 233.95 473.32 234.62 C477.01 235.29 480.69 235.51 484.38 235.96 C488.07 236.41 491.76 236.63 495.45 237.30 C499.14 237.97 502.83 239.53 506.52 239.98 C510.21 240.43 513.90 239.98 517.59 239.98 C521.28 239.98 524.97 240.20 528.66 239.98 C532.35 239.76 536.03 239.09 539.72 238.64 C543.41 238.19 547.10 237.30 550.79 237.30 C554.48 237.30 558.17 238.19 561.86 238.64 C565.55 239.09 569.24 239.76 572.93 239.98 C576.62 240.20 582.15 239.98 584.00 239.98" fill="none" stroke="#ff3a3a" stroke-width="1.15"/>
<path d="M63.80 260.08 C65.64 260.30 71.18 260.97 74.87 261.42 C78.56 261.87 82.25 262.54 85.94 262.76 C89.63 262.98 93.31 262.76 97.00 262.76 C100.69 262.76 104.38 262.98 108.07 262.76 C111.76 262.54 115.45 261.87 119.14 261.42 C122.83 260.97 126.52 260.53 130.21 260.08 C133.90 259.63 137.59 259.41 141.28 258.74 C144.97 258.07 148.65 257.18 152.34 256.06 C156.03 254.94 159.72 253.38 163.41 252.04 C167.10 250.70 170.79 248.91 174.48 248.02 C178.17 247.13 181.86 246.90 185.55 246.68 C189.24 246.46 192.93 246.46 196.62 246.68 C200.31 246.90 203.99 247.57 207.68 248.02 C211.37 248.47 215.06 248.91 218.75 249.36 C222.44 249.81 226.13 250.25 229.82 250.70 C233.51 251.15 237.20 251.59 240.89 252.04 C244.58 252.49 248.27 252.71 251.96 253.38 C255.65 254.05 259.33 255.17 263.02 256.06 C266.71 256.95 270.40 257.85 274.09 258.74 C277.78 259.63 281.47 261.20 285.16 261.42 C288.85 261.64 292.54 260.30 296.23 260.08 C299.92 259.86 303.61 260.30 307.30 260.08 C310.99 259.86 314.67 258.74 318.36 258.74 C322.05 258.74 325.74 259.41 329.43 260.08 C333.12 260.75 336.81 262.09 340.50 262.76 C344.19 263.43 347.88 264.10 351.57 264.10 C355.26 264.10 358.95 263.21 362.64 262.76 C366.33 262.31 370.01 262.09 373.70 261.42 C377.39 260.75 381.08 259.41 384.77 258.74 C388.46 258.07 392.15 258.07 395.84 257.40 C399.53 256.73 403.22 255.39 406.91 254.72 C410.60 254.05 414.29 254.05 417.98 253.38 C421.67 252.71 425.35 251.82 429.04 250.70 C432.73 249.58 436.42 247.35 440.11 246.68 C443.80 246.01 447.49 246.46 451.18 246.68 C454.87 246.90 458.56 247.13 462.25 248.02 C465.94 248.91 469.63 250.70 473.32 252.04 C477.01 253.38 480.69 255.17 484.38 256.06 C488.07 256.95 491.76 257.18 495.45 257.40 C499.14 257.62 502.83 257.40 506.52 257.40 C510.21 257.40 513.90 257.18 517.59 257.40 C521.28 257.62 524.97 258.52 528.66 258.74 C532.35 258.96 536.03 258.74 539.72 258.74 C543.41 258.74 547.10 258.74 550.79 258.74 C554.48 258.74 558.17 258.96 561.86 258.74 C565.55 258.52 569.24 257.62 572.93 257.40 C576.62 257.18 582.15 257.40 584.00 257.40" fill="none" stroke="#33a833" stroke-width="1.15"/>
<path d="M63.80 262.76 C65.64 262.54 71.18 261.87 74.87 261.42 C78.56 260.97 82.25 260.97 85.94 260.08 C89.63 259.19 93.31 257.62 97.00 256.06 C100.69 254.50 104.38 252.71 108.07 250.70 C111.76 248.69 115.45 245.79 119.14 244.00 C122.83 242.21 126.52 241.10 130.21 239.98 C133.90 238.86 137.59 237.97 141.28 237.30 C144.97 236.63 148.65 236.18 152.34 235.96 C156.03 235.74 159.72 235.74 163.41 235.96 C167.10 236.18 170.79 236.63 174.48 237.30 C178.17 237.97 181.86 239.31 185.55 239.98 C189.24 240.65 192.93 240.65 196.62 241.32 C200.31 241.99 203.99 243.33 207.68 244.00 C211.37 244.67 215.06 244.89 218.75 245.34 C222.44 245.79 226.13 246.23 229.82 246.68 C233.51 247.13 237.20 247.35 240.89 248.02 C244.58 248.69 248.27 250.25 251.96 250.70 C255.65 251.15 259.33 250.48 263.02 250.70 C266.71 250.92 270.40 251.59 274.09 252.04 C277.78 252.49 281.47 252.93 285.16 253.38 C288.85 253.83 292.54 254.50 296.23 254.72 C299.92 254.94 303.61 254.50 307.30 254.72 C310.99 254.94 314.67 255.84 318.36 256.06 C322.05 256.28 325.74 256.06 329.43 256.06 C333.12 256.06 336.81 256.28 340.50 256.06 C344.19 255.84 347.88 255.61 351.57 254.72 C355.26 253.83 358.95 252.04 362.64 250.70 C366.33 249.36 370.01 248.24 373.70 246.68 C377.39 245.12 381.08 242.66 384.77 241.32 C388.46 239.98 392.15 239.53 395.84 238.64 C399.53 237.75 403.22 236.85 406.91 235.96 C410.60 235.07 414.29 233.50 417.98 233.28 C421.67 233.06 425.35 233.95 429.04 234.62 C432.73 235.29 436.42 236.18 440.11 237.30 C443.80 238.42 447.49 240.20 451.18 241.32 C454.87 242.44 458.56 243.11 462.25 244.00 C465.94 244.89 469.63 245.79 473.32 246.68 C477.01 247.57 480.69 248.47 484.38 249.36 C488.07 250.25 491.76 251.15 495.45 252.04 C499.14 252.93 502.83 254.50 506.52 254.72 C510.21 254.94 513.90 253.60 517.59 253.38 C521.28 253.16 524.97 253.60 528.66 253.38 C532.35 253.16 536.03 252.26 539.72 252.04 C543.41 251.82 547.10 252.04 550.79 252.04 C554.48 252.04 558.17 251.82 561.86 252.04 C565.55 252.26 569.24 253.16 572.93 253.38 C576.62 253.60 582.15 253.38 584.00 253.38" fill="none" stroke="#3a3aff" stroke-width="1.15"/>
<circle cx="63.80" cy="249.36" r="1.15" fill="#111"/><circle cx="74.87" cy="249.36" r="1.15" fill="#111"/><circle cx="85.94" cy="248.02" r="1.15" fill="#111"/><circle cx="97.00" cy="244.00" r="1.15" fill="#111"/><circle cx="108.07" cy="239.98" r="1.15" fill="#111"/><circle cx="119.14" cy="235.96" r="1.15" fill="#111"/><circle cx="130.21" cy="231.94" r="1.15" fill="#111"/><circle cx="141.28" cy="229.26" r="1.15" fill="#111"/><circle cx="152.34" cy="227.92" r="1.15" fill="#111"/><circle cx="163.41" cy="227.92" r="1.15" fill="#111"/><circle cx="174.48" cy="229.26" r="1.15" fill="#111"/><circle cx="185.55" cy="230.60" r="1.15" fill="#111"/><circle cx="196.62" cy="231.94" r="1.15" fill="#111"/><circle cx="207.68" cy="233.28" r="1.15" fill="#111"/><circle cx="218.75" cy="234.62" r="1.15" fill="#111"/><circle cx="229.82" cy="235.96" r="1.15" fill="#111"/><circle cx="240.89" cy="237.30" r="1.15" fill="#111"/><circle cx="251.96" cy="238.64" r="1.15" fill="#111"/><circle cx="263.02" cy="238.64" r="1.15" fill="#111"/><circle cx="274.09" cy="238.64" r="1.15" fill="#111"/><circle cx="285.16" cy="239.98" r="1.15" fill="#111"/><circle cx="296.23" cy="239.98" r="1.15" fill="#111"/><circle cx="307.30" cy="239.98" r="1.15" fill="#111"/><circle cx="318.36" cy="241.32" r="1.15" fill="#111"/><circle cx="329.43" cy="241.32" r="1.15" fill="#111"/><circle cx="340.50" cy="241.32" r="1.15" fill="#111"/><circle cx="351.57" cy="239.98" r="1.15" fill="#111"/><circle cx="362.64" cy="237.30" r="1.15" fill="#111"/><circle cx="373.70" cy="233.28" r="1.15" fill="#111"/><circle cx="384.77" cy="229.26" r="1.15" fill="#111"/><circle cx="395.84" cy="226.58" r="1.15" fill="#111"/><circle cx="406.91" cy="225.24" r="1.15" fill="#111"/><circle cx="417.98" cy="223.90" r="1.15" fill="#111"/><circle cx="429.04" cy="225.24" r="1.15" fill="#111"/><circle cx="440.11" cy="227.92" r="1.15" fill="#111"/><circle cx="451.18" cy="229.26" r="1.15" fill="#111"/><circle cx="462.25" cy="231.94" r="1.15" fill="#111"/><circle cx="473.32" cy="234.62" r="1.15" fill="#111"/><circle cx="484.38" cy="235.96" r="1.15" fill="#111"/><circle cx="495.45" cy="237.30" r="1.15" fill="#111"/><circle cx="506.52" cy="239.98" r="1.15" fill="#111"/><circle cx="517.59" cy="239.98" r="1.15" fill="#111"/><circle cx="528.66" cy="239.98" r="1.15" fill="#111"/><circle cx="539.72" cy="238.64" r="1.15" fill="#111"/><circle cx="550.79" cy="237.30" r="1.15" fill="#111"/><circle cx="561.86" cy="238.64" r="1.15" fill="#111"/><circle cx="572.93" cy="239.98" r="1.15" fill="#111"/><circle cx="584.00" cy="239.98" r="1.15" fill="#111"/>
<circle cx="63.80" cy="260.08" r="1.15" fill="#111"/><circle cx="74.87" cy="261.42" r="1.15" fill="#111"/><circle cx="85.94" cy="262.76" r="1.15" fill="#111"/><circle cx="97.00" cy="262.76" r="1.15" fill="#111"/><circle cx="108.07" cy="262.76" r="1.15" fill="#111"/><circle cx="119.14" cy="261.42" r="1.15" fill="#111"/><circle cx="130.21" cy="260.08" r="1.15" fill="#111"/><circle cx="141.28" cy="258.74" r="1.15" fill="#111"/><circle cx="152.34" cy="256.06" r="1.15" fill="#111"/><circle cx="163.41" cy="252.04" r="1.15" fill="#111"/><circle cx="174.48" cy="248.02" r="1.15" fill="#111"/><circle cx="185.55" cy="246.68" r="1.15" fill="#111"/><circle cx="196.62" cy="246.68" r="1.15" fill="#111"/><circle cx="207.68" cy="248.02" r="1.15" fill="#111"/><circle cx="218.75" cy="249.36" r="1.15" fill="#111"/><circle cx="229.82" cy="250.70" r="1.15" fill="#111"/><circle cx="240.89" cy="252.04" r="1.15" fill="#111"/><circle cx="251.96" cy="253.38" r="1.15" fill="#111"/><circle cx="263.02" cy="256.06" r="1.15" fill="#111"/><circle cx="274.09" cy="258.74" r="1.15" fill="#111"/><circle cx="285.16" cy="261.42" r="1.15" fill="#111"/><circle cx="296.23" cy="260.08" r="1.15" fill="#111"/><circle cx="307.30" cy="260.08" r="1.15" fill="#111"/><circle cx="318.36" cy="258.74" r="1.15" fill="#111"/><circle cx="329.43" cy="260.08" r="1.15" fill="#111"/><circle cx="340.50" cy="262.76" r="1.15" fill="#111"/><circle cx="351.57" cy="264.10" r="1.15" fill="#111"/><circle cx="362.64" cy="262.76" r="1.15" fill="#111"/><circle cx="373.70" cy="261.42" r="1.15" fill="#111"/><circle cx="384.77" cy="258.74" r="1.15" fill="#111"/><circle cx="395.84" cy="257.40" r="1.15" fill="#111"/><circle cx="406.91" cy="254.72" r="1.15" fill="#111"/><circle cx="417.98" cy="253.38" r="1.15" fill="#111"/><circle cx="429.04" cy="250.70" r="1.15" fill="#111"/><circle cx="440.11" cy="246.68" r="1.15" fill="#111"/><circle cx="451.18" cy="246.68" r="1.15" fill="#111"/><circle cx="462.25" cy="248.02" r="1.15" fill="#111"/><circle cx="473.32" cy="252.04" r="1.15" fill="#111"/><circle cx="484.38" cy="256.06" r="1.15" fill="#111"/><circle cx="495.45" cy="257.40" r="1.15" fill="#111"/><circle cx="506.52" cy="257.40" r="1.15" fill="#111"/><circle cx="517.59" cy="257.40" r="1.15" fill="#111"/><circle cx="528.66" cy="258.74" r="1.15" fill="#111"/><circle cx="539.72" cy="258.74" r="1.15" fill="#111"/><circle cx="550.79" cy="258.74" r="1.15" fill="#111"/><circle cx="561.86" cy="258.74" r="1.15" fill="#111"/><circle cx="572.93" cy="257.40" r="1.15" fill="#111"/><circle cx="584.00" cy="257.40" r="1.15" fill="#111"/>
<circle cx="63.80" cy="262.76" r="1.15" fill="#111"/><circle cx="74.87" cy="261.42" r="1.15" fill="#111"/><circle cx="85.94" cy="260.08" r="1.15" fill="#111"/><circle cx="97.00" cy="256.06" r="1.15" fill="#111"/><circle cx="108.07" cy="250.70" r="1.15" fill="#111"/><circle cx="119.14" cy="244.00" r="1.15" fill="#111"/><circle cx="130.21" cy="239.98" r="1.15" fill="#111"/><circle cx="141.28" cy="237.30" r="1.15" fill="#111"/><circle cx="152.34" cy="235.96" r="1.15" fill="#111"/><circle cx="163.41" cy="235.96" r="1.15" fill="#111"/><circle cx="174.48" cy="237.30" r="1.15" fill="#111"/><circle cx="185.55" cy="239.98" r="1.15" fill="#111"/><circle cx="196.62" cy="241.32" r="1.15" fill="#111"/><circle cx="207.68" cy="244.00" r="1.15" fill="#111"/><circle cx="218.75" cy="245.34" r="1.15" fill="#111"/><circle cx="229.82" cy="246.68" r="1.15" fill="#111"/><circle cx="240.89" cy="248.02" r="1.15" fill="#111"/><circle cx="251.96" cy="250.70" r="1.15" fill="#111"/><circle cx="263.02" cy="250.70" r="1.15" fill="#111"/><circle cx="274.09" cy="252.04" r="1.15" fill="#111"/><circle cx="285.16" cy="253.38" r="1.15" fill="#111"/><circle cx="296.23" cy="254.72" r="1.15" fill="#111"/><circle cx="307.30" cy="254.72" r="1.15" fill="#111"/><circle cx="318.36" cy="256.06" r="1.15" fill="#111"/><circle cx="329.43" cy="256.06" r="1.15" fill="#111"/><circle cx="340.50" cy="256.06" r="1.15" fill="#111"/><circle cx="351.57" cy="254.72" r="1.15" fill="#111"/><circle cx="362.64" cy="250.70" r="1.15" fill="#111"/><circle cx="373.70" cy="246.68" r="1.15" fill="#111"/><circle cx="384.77" cy="241.32" r="1.15" fill="#111"/><circle cx="395.84" cy="238.64" r="1.15" fill="#111"/><circle cx="406.91" cy="235.96" r="1.15" fill="#111"/><circle cx="417.98" cy="233.28" r="1.15" fill="#111"/><circle cx="429.04" cy="234.62" r="1.15" fill="#111"/><circle cx="440.11" cy="237.30" r="1.15" fill="#111"/><circle cx="451.18" cy="241.32" r="1.15" fill="#111"/><circle cx="462.25" cy="244.00" r="1.15" fill="#111"/><circle cx="473.32" cy="246.68" r="1.15" fill="#111"/><circle cx="484.38" cy="249.36" r="1.15" fill="#111"/><circle cx="495.45" cy="252.04" r="1.15" fill="#111"/><circle cx="506.52" cy="254.72" r="1.15" fill="#111"/><circle cx="517.59" cy="253.38" r="1.15" fill="#111"/><circle cx="528.66" cy="253.38" r="1.15" fill="#111"/><circle cx="539.72" cy="252.04" r="1.15" fill="#111"/><circle cx="550.79" cy="252.04" r="1.15" fill="#111"/><circle cx="561.86" cy="252.04" r="1.15" fill="#111"/><circle cx="572.93" cy="253.38" r="1.15" fill="#111"/><circle cx="584.00" cy="253.38" r="1.15" fill="#111"/>
<text x="85.74" y="246.42" class="vl" text-anchor="middle" fill="#ff0000">22<tspan class="dg" dy="-1.2">°</tspan></text>
<text x="118.94" y="234.36" class="vl" text-anchor="middle" fill="#ff0000">31<tspan class="dg" dy="-1.2">°</tspan></text>
<text x="152.14" y="226.32" class="vl" text-anchor="middle" fill="#ff0000">37<tspan class="dg" dy="-1.2">°</tspan></text>
<text x="185.35" y="229.00" class="vl" text-anchor="middle" fill="#ff0000">35<tspan class="dg" dy="-1.2">°</tspan></text>
<text x="218.55" y="233.02" class="vl" text-anchor="middle" fill="#ff0000">32<tspan class="dg" dy="-1.2">°</tspan></text>
<text x="251.76" y="237.04" class="vl" text-anchor="middle" fill="#ff0000">29<tspan class="dg" dy="-1.2">°</tspan></text>
<text x="284.96" y="238.38" class="vl" text-anchor="middle" fill="#ff0000">28<tspan class="dg" dy="-1.2">°</tspan></text>
<text x="318.16" y="239.72" class="vl" text-anchor="middle" fill="#ff0000">27<tspan class="dg" dy="-1.2">°</tspan></text>
<text x="351.37" y="238.38" class="vl" text-anchor="middle" fill="#ff0000">28<tspan class="dg" dy="-1.2">°</tspan></text>
<text x="384.57" y="227.66" class="vl" text-anchor="middle" fill="#ff0000">36<tspan class="dg" dy="-1.2">°</tspan></text>
<text x="417.78" y="222.30" class="vl" text-anchor="middle" fill="#ff0000">40<tspan class="dg" dy="-1.2">°</tspan></text>
<text x="450.98" y="227.66" class="vl" text-anchor="middle" fill="#ff0000">36<tspan class="dg" dy="-1.2">°</tspan></text>
<text x="484.18" y="234.36" class="vl" text-anchor="middle" fill="#ff0000">31<tspan class="dg" dy="-1.2">°</tspan></text>
<text x="517.39" y="238.38" class="vl" text-anchor="middle" fill="#ff0000">28<tspan class="dg" dy="-1.2">°</tspan></text>
<text x="550.59" y="235.70" class="vl" text-anchor="middle" fill="#ff0000">30<tspan class="dg" dy="-1.2">°</tspan></text>
<text x="583.80" y="238.38" class="vl" text-anchor="middle" fill="#ff0000">28<tspan class="dg" dy="-1.2">°</tspan></text>
<text x="85.74" y="269.36" class="vl" text-anchor="middle" fill="#009900">11<tspan class="dg" dy="-1.2">°</tspan></text>
<text x="118.94" y="268.02" class="vl" text-anchor="middle" fill="#009900">12<tspan class="dg" dy="-1.2">°</tspan></text>
<text x="152.14" y="262.66" class="vl" text-anchor="middle" fill="#009900">16<tspan class="dg" dy="-1.2">°</tspan></text>
<text x="185.35" y="253.28" class="vl" text-anchor="middle" fill="#009900">23<tspan class="dg" dy="-1.2">°</tspan></text>
<text x="218.55" y="255.96" class="vl" text-anchor="middle" fill="#009900">21<tspan class="dg" dy="-1.2">°</tspan></text>
<text x="251.76" y="259.98" class="vl" text-anchor="middle" fill="#009900">18<tspan class="dg" dy="-1.2">°</tspan></text>
<text x="284.96" y="268.02" class="vl" text-anchor="middle" fill="#009900">12<tspan class="dg" dy="-1.2">°</tspan></text>
<text x="318.16" y="265.34" class="vl" text-anchor="middle" fill="#009900">14<tspan class="dg" dy="-1.2">°</tspan></text>
<text x="351.37" y="270.70" class="vl" text-anchor="middle" fill="#009900">10<tspan class="dg" dy="-1.2">°</tspan></text>
<text x="384.57" y="265.34" class="vl" text-anchor="middle" fill="#009900">14<tspan class="dg" dy="-1.2">°</tspan></text>
<text x="417.78" y="259.98" class="vl" text-anchor="middle" fill="#009900">18<tspan class="dg" dy="-1.2">°</tspan></text>
<text x="450.98" y="253.28" class="vl" text-anchor="middle" fill="#009900">23<tspan class="dg" dy="-1.2">°</tspan></text>
<text x="484.18" y="262.66" class="vl" text-anchor="middle" fill="#009900">16<tspan class="dg" dy="-1.2">°</tspan></text>
<text x="517.39" y="264.00" class="vl" text-anchor="middle" fill="#009900">15<tspan class="dg" dy="-1.2">°</tspan></text>
<text x="550.59" y="265.34" class="vl" text-anchor="middle" fill="#009900">14<tspan class="dg" dy="-1.2">°</tspan></text>
<text x="583.80" y="264.00" class="vl" text-anchor="middle" fill="#009900">15<tspan class="dg" dy="-1.2">°</tspan></text>
<text x="85.74" y="266.68" class="vl" text-anchor="middle" fill="#0000ff">13<tspan class="dg" dy="-1.2">°</tspan></text>
<text x="118.94" y="250.60" class="vl" text-anchor="middle" fill="#0000ff">25<tspan class="dg" dy="-1.2">°</tspan></text>
<text x="152.14" y="242.56" class="vl" text-anchor="middle" fill="#0000ff">31<tspan class="dg" dy="-1.2">°</tspan></text>
<text x="185.35" y="246.58" class="vl" text-anchor="middle" fill="#0000ff">28<tspan class="dg" dy="-1.2">°</tspan></text>
<text x="218.55" y="251.94" class="vl" text-anchor="middle" fill="#0000ff">24<tspan class="dg" dy="-1.2">°</tspan></text>
<text x="251.76" y="257.30" class="vl" text-anchor="middle" fill="#0000ff">20<tspan class="dg" dy="-1.2">°</tspan></text>
<text x="284.96" y="259.98" class="vl" text-anchor="middle" fill="#0000ff">18<tspan class="dg" dy="-1.2">°</tspan></text>
<text x="318.16" y="262.66" class="vl" text-anchor="middle" fill="#0000ff">16<tspan class="dg" dy="-1.2">°</tspan></text>
<text x="351.37" y="261.32" class="vl" text-anchor="middle" fill="#0000ff">17<tspan class="dg" dy="-1.2">°</tspan></text>
<text x="384.57" y="247.92" class="vl" text-anchor="middle" fill="#0000ff">27<tspan class="dg" dy="-1.2">°</tspan></text>
<text x="417.78" y="239.88" class="vl" text-anchor="middle" fill="#0000ff">33<tspan class="dg" dy="-1.2">°</tspan></text>
<text x="450.98" y="247.92" class="vl" text-anchor="middle" fill="#0000ff">27<tspan class="dg" dy="-1.2">°</tspan></text>
<text x="484.18" y="255.96" class="vl" text-anchor="middle" fill="#0000ff">21<tspan class="dg" dy="-1.2">°</tspan></text>
<text x="517.39" y="259.98" class="vl" text-anchor="middle" fill="#0000ff">18<tspan class="dg" dy="-1.2">°</tspan></text>
<text x="550.59" y="258.64" class="vl" text-anchor="middle" fill="#0000ff">19<tspan class="dg" dy="-1.2">°</tspan></text>
<text x="583.80" y="259.98" class="vl" text-anchor="middle" fill="#0000ff">18<tspan class="dg" dy="-1.2">°</tspan></text>
<rect x="424.2" y="196.7" width="54.60000000000002" height="7.2" fill="#0000dd" stroke="#000" stroke-width="0.7"/>
<text x="451.50" y="202.40" class="lg" text-anchor="middle" textLength="48.6" lengthAdjust="spacing">Wind Chill (°F)</text>
<rect x="478.8" y="196.7" width="52.19999999999999" height="7.2" fill="#008a00" stroke="#000" stroke-width="0.7"/>
<text x="504.90" y="202.40" class="lg" text-anchor="middle" textLength="46.2" lengthAdjust="spacing">Dewpoint (°F)</text>
<rect x="531.0" y="196.7" width="62.700000000000045" height="7.2" fill="#ee0000" stroke="#000" stroke-width="0.7"/>
<text x="562.35" y="202.40" class="lg" text-anchor="middle" textLength="56.7" lengthAdjust="spacing">Temperature (°F)</text>
<path d="M63.80 343.68 L75.00 347.98 L72.46 353.19" fill="none" stroke="#707070" stroke-width="0.8"/>
<path d="M74.87 343.68 L86.07 347.98 L83.53 353.19" fill="none" stroke="#707070" stroke-width="0.8"/>
<path d="M85.94 343.68 L97.14 347.98 L94.60 353.19" fill="none" stroke="#707070" stroke-width="0.8"/>
<path d="M97.00 343.68 L108.21 347.98 L105.66 353.19" fill="none" stroke="#707070" stroke-width="0.8"/>
<path d="M108.07 343.68 L119.27 347.98 L116.73 353.19" fill="none" stroke="#707070" stroke-width="0.8"/>
<path d="M119.14 346.02 L130.62 349.53 L128.44 354.91" fill="none" stroke="#707070" stroke-width="0.8"/>
<path d="M130.21 346.02 L141.68 349.53 L139.51 354.91" fill="none" stroke="#707070" stroke-width="0.8"/>
<path d="M141.28 346.02 L152.75 349.53 L150.58 354.91" fill="none" stroke="#707070" stroke-width="0.8"/>
<path d="M152.34 346.02 L141.07 341.92 L142.34 339.20" fill="none" stroke="#707070" stroke-width="0.8"/>
<path d="M163.41 346.02 L152.14 341.92 L153.40 339.20" fill="none" stroke="#707070" stroke-width="0.8"/>
<path d="M174.48 346.02 L163.20 341.92 L164.47 339.20" fill="none" stroke="#707070" stroke-width="0.8"/>
<path d="M185.55 343.68 L193.58 352.60 L188.95 356.09" fill="none" stroke="#707070" stroke-width="0.8"/>
<path d="M196.62 343.68 L204.65 352.60 L200.01 356.09" fill="none" stroke="#707070" stroke-width="0.8"/>
<path d="M207.68 343.68 L215.71 352.60 L211.08 356.09" fill="none" stroke="#707070" stroke-width="0.8"/>
<path d="M218.75 343.68 L230.03 347.78 L227.58 353.04" fill="none" stroke="#707070" stroke-width="0.8"/>
<path d="M229.82 343.68 L241.10 347.78 L238.65 353.04" fill="none" stroke="#707070" stroke-width="0.8"/>
<path d="M240.89 343.68 L252.16 347.78 L249.71 353.04" fill="none" stroke="#707070" stroke-width="0.8"/>
<path d="M251.96 339.00 L262.92 343.88 L260.11 348.95" fill="none" stroke="#707070" stroke-width="0.8"/>
<path d="M263.02 339.00 L273.99 343.88 L271.17 348.95" fill="none" stroke="#707070" stroke-width="0.8"/>
<path d="M274.09 339.00 L285.05 343.88 L282.24 348.95" fill="none" stroke="#707070" stroke-width="0.8"/>
<path d="M285.16 331.98 L295.34 338.34 L291.85 342.97" fill="none" stroke="#707070" stroke-width="0.8"/>
<path d="M296.23 331.98 L306.40 338.34 L302.91 342.97" fill="none" stroke="#707070" stroke-width="0.8"/>
<path d="M307.30 331.98 L317.47 338.34 L313.98 342.97" fill="none" stroke="#707070" stroke-width="0.8"/>
<path d="M318.36 331.98 L328.54 338.34 L325.05 342.97" fill="none" stroke="#707070" stroke-width="0.8"/>
<path d="M329.43 331.98 L339.61 338.34 L336.12 342.97" fill="none" stroke="#707070" stroke-width="0.8"/>
<path d="M340.50 331.98 L350.68 338.34 L347.19 342.97" fill="none" stroke="#707070" stroke-width="0.8"/>
<path d="M351.57 329.64 L362.06 335.46 L358.82 340.27" fill="none" stroke="#707070" stroke-width="0.8"/>
<path d="M362.64 329.64 L373.13 335.46 L369.89 340.27" fill="none" stroke="#707070" stroke-width="0.8"/>
<path d="M373.70 329.64 L384.20 335.46 L380.96 340.27" fill="none" stroke="#707070" stroke-width="0.8"/>
<path d="M384.77 329.64 L395.27 335.46 L392.02 340.27" fill="none" stroke="#707070" stroke-width="0.8"/>
<path d="M395.84 329.64 L406.34 335.46 L403.09 340.27" fill="none" stroke="#707070" stroke-width="0.8"/>
<path d="M406.91 329.64 L417.40 335.46 L414.16 340.27" fill="none" stroke="#707070" stroke-width="0.8"/>
<path d="M417.98 336.66 L428.85 341.73 L425.95 346.75" fill="none" stroke="#707070" stroke-width="0.8"/>
<path d="M429.04 336.66 L439.92 341.73 L437.02 346.75" fill="none" stroke="#707070" stroke-width="0.8"/>
<path d="M440.11 336.66 L450.99 341.73 L448.09 346.75" fill="none" stroke="#707070" stroke-width="0.8"/>
<path d="M451.18 336.66 L462.06 341.73 L459.16 346.75" fill="none" stroke="#707070" stroke-width="0.8"/>
<path d="M462.25 336.66 L473.12 341.73 L470.22 346.75" fill="none" stroke="#707070" stroke-width="0.8"/>
<path d="M473.32 336.66 L484.19 341.73 L481.29 346.75" fill="none" stroke="#707070" stroke-width="0.8"/>
<path d="M484.38 329.64 L495.26 334.71 L492.36 339.73" fill="none" stroke="#707070" stroke-width="0.8"/>
<path d="M495.45 329.64 L506.33 334.71 L503.43 339.73" fill="none" stroke="#707070" stroke-width="0.8"/>
<path d="M506.52 329.64 L517.40 334.71 L514.50 339.73" fill="none" stroke="#707070" stroke-width="0.8"/>
<path d="M517.59 331.98 L528.46 337.05 L525.56 342.07" fill="none" stroke="#707070" stroke-width="0.8"/>
<path d="M528.66 331.98 L539.53 337.05 L536.63 342.07" fill="none" stroke="#707070" stroke-width="0.8"/>
<path d="M539.72 331.98 L550.60 337.05 L547.70 342.07" fill="none" stroke="#707070" stroke-width="0.8"/>
<path d="M550.79 331.98 L561.67 337.05 L558.77 342.07" fill="none" stroke="#707070" stroke-width="0.8"/>
<path d="M561.86 331.98 L572.74 337.05 L569.84 342.07" fill="none" stroke="#707070" stroke-width="0.8"/>
<path d="M572.93 331.98 L583.80 337.05 L580.90 342.07" fill="none" stroke="#707070" stroke-width="0.8"/>
<path d="M584.00 336.66 L594.87 341.73 L591.97 346.75" fill="none" stroke="#707070" stroke-width="0.8"/>
<path d="M63.80 343.68 L74.87 343.68 L85.94 343.68 L97.00 343.68 L108.07 343.68 L119.14 346.02 L130.21 346.02 L141.28 346.02 L152.34 346.02 L163.41 346.02 L174.48 346.02 L185.55 343.68 L196.62 343.68 L207.68 343.68 L218.75 343.68 L229.82 343.68 L240.89 343.68 L251.96 339.00 L263.02 339.00 L274.09 339.00 L285.16 331.98 L296.23 331.98 L307.30 331.98 L318.36 331.98 L329.43 331.98 L340.50 331.98 L351.57 329.64 L362.64 329.64 L373.70 329.64 L384.77 329.64 L395.84 329.64 L406.91 329.64 L417.98 336.66 L429.04 336.66 L440.11 336.66 L451.18 336.66 L462.25 336.66 L473.32 336.66 L484.38 329.64 L495.45 329.64 L506.52 329.64 L517.59 331.98 L528.66 331.98 L539.72 331.98 L550.79 331.98 L561.86 331.98 L572.93 331.98 L584.00 336.66" fill="none" stroke="#c040c0" stroke-width="1.2"/>
<path d="M351.57 320.28 L362.64 320.28 L373.70 320.28 L384.77 320.28 L395.84 320.28 L406.91 320.28" fill="none" stroke="#7070c0" stroke-width="1.15"/>
<circle cx="63.80" cy="343.68" r="1.15" fill="#111"/><circle cx="74.87" cy="343.68" r="1.15" fill="#111"/><circle cx="85.94" cy="343.68" r="1.15" fill="#111"/><circle cx="97.00" cy="343.68" r="1.15" fill="#111"/><circle cx="108.07" cy="343.68" r="1.15" fill="#111"/><circle cx="119.14" cy="346.02" r="1.15" fill="#111"/><circle cx="130.21" cy="346.02" r="1.15" fill="#111"/><circle cx="141.28" cy="346.02" r="1.15" fill="#111"/><circle cx="152.34" cy="346.02" r="1.15" fill="#111"/><circle cx="163.41" cy="346.02" r="1.15" fill="#111"/><circle cx="174.48" cy="346.02" r="1.15" fill="#111"/><circle cx="185.55" cy="343.68" r="1.15" fill="#111"/><circle cx="196.62" cy="343.68" r="1.15" fill="#111"/><circle cx="207.68" cy="343.68" r="1.15" fill="#111"/><circle cx="218.75" cy="343.68" r="1.15" fill="#111"/><circle cx="229.82" cy="343.68" r="1.15" fill="#111"/><circle cx="240.89" cy="343.68" r="1.15" fill="#111"/><circle cx="251.96" cy="339.00" r="1.15" fill="#111"/><circle cx="263.02" cy="339.00" r="1.15" fill="#111"/><circle cx="274.09" cy="339.00" r="1.15" fill="#111"/><circle cx="285.16" cy="331.98" r="1.15" fill="#111"/><circle cx="296.23" cy="331.98" r="1.15" fill="#111"/><circle cx="307.30" cy="331.98" r="1.15" fill="#111"/><circle cx="318.36" cy="331.98" r="1.15" fill="#111"/><circle cx="329.43" cy="331.98" r="1.15" fill="#111"/><circle cx="340.50" cy="331.98" r="1.15" fill="#111"/><circle cx="351.57" cy="329.64" r="1.15" fill="#111"/><circle cx="362.64" cy="329.64" r="1.15" fill="#111"/><circle cx="373.70" cy="329.64" r="1.15" fill="#111"/><circle cx="384.77" cy="329.64" r="1.15" fill="#111"/><circle cx="395.84" cy="329.64" r="1.15" fill="#111"/><circle cx="406.91" cy="329.64" r="1.15" fill="#111"/><circle cx="417.98" cy="336.66" r="1.15" fill="#111"/><circle cx="429.04" cy="336.66" r="1.15" fill="#111"/><circle cx="440.11" cy="336.66" r="1.15" fill="#111"/><circle cx="451.18" cy="336.66" r="1.15" fill="#111"/><circle cx="462.25" cy="336.66" r="1.15" fill="#111"/><circle cx="473.32" cy="336.66" r="1.15" fill="#111"/><circle cx="484.38" cy="329.64" r="1.15" fill="#111"/><circle cx="495.45" cy="329.64" r="1.15" fill="#111"/><circle cx="506.52" cy="329.64" r="1.15" fill="#111"/><circle cx="517.59" cy="331.98" r="1.15" fill="#111"/><circle cx="528.66" cy="331.98" r="1.15" fill="#111"/><circle cx="539.72" cy="331.98" r="1.15" fill="#111"/><circle cx="550.79" cy="331.98" r="1.15" fill="#111"/><circle cx="561.86" cy="331.98" r="1.15" fill="#111"/><circle cx="572.93" cy="331.98" r="1.15" fill="#111"/><circle cx="584.00" cy="336.66" r="1.15" fill="#111"/>
<circle cx="351.57" cy="320.28" r="1.15" fill="#111"/><circle cx="362.64" cy="320.28" r="1.15" fill="#111"/><circle cx="373.70" cy="320.28" r="1.15" fill="#111"/><circle cx="384.77" cy="320.28" r="1.15" fill="#111"/><circle cx="395.84" cy="320.28" r="1.15" fill="#111"/><circle cx="406.91" cy="320.28" r="1.15" fill="#111"/>
<text x="86.24" y="350.48" class="vl" style="font-style:normal" text-anchor="middle" fill="#b020b0">8</text>
<text x="119.44" y="352.82" class="vl" style="font-style:normal" text-anchor="middle" fill="#b020b0">7</text>
<text x="152.64" y="352.82" class="vl" style="font-style:normal" text-anchor="middle" fill="#b020b0">7</text>
<text x="185.85" y="350.48" class="vl" style="font-style:normal" text-anchor="middle" fill="#b020b0">8</text>
<text x="219.05" y="350.48" class="vl" style="font-style:normal" text-anchor="middle" fill="#b020b0">8</text>
<text x="252.26" y="345.80" class="vl" style="font-style:normal" text-anchor="middle" fill="#b020b0">10</text>
<text x="285.46" y="338.78" class="vl" style="font-style:normal" text-anchor="middle" fill="#b020b0">13</text>
<text x="318.66" y="338.78" class="vl" style="font-style:normal" text-anchor="middle" fill="#b020b0">13</text>
<text x="351.87" y="336.44" class="vl" style="font-style:normal" text-anchor="middle" fill="#b020b0">14</text>
<text x="385.07" y="336.44" class="vl" style="font-style:normal" text-anchor="middle" fill="#b020b0">14</text>
<text x="418.28" y="343.46" class="vl" style="font-style:normal" text-anchor="middle" fill="#b020b0">11</text>
<text x="451.48" y="343.46" class="vl" style="font-style:normal" text-anchor="middle" fill="#b020b0">11</text>
<text x="484.68" y="336.44" class="vl" style="font-style:normal" text-anchor="middle" fill="#b020b0">14</text>
<text x="517.89" y="338.78" class="vl" style="font-style:normal" text-anchor="middle" fill="#b020b0">13</text>
<text x="551.09" y="338.78" class="vl" style="font-style:normal" text-anchor="middle" fill="#b020b0">13</text>
<text x="584.30" y="343.46" class="vl" style="font-style:normal" text-anchor="middle" fill="#b020b0">11</text>
<text x="351.87" y="327.08" class="vl" style="font-style:normal" text-anchor="middle" fill="#5050a0">18</text>
<text x="385.07" y="327.08" class="vl" style="font-style:normal" text-anchor="middle" fill="#5050a0">18</text>
<rect x="475.0" y="291.5" width="46.799999999999955" height="7.3" fill="#000080" stroke="#000" stroke-width="0.7"/>
<text x="498.40" y="297.30" class="lg" text-anchor="middle" textLength="40.8" lengthAdjust="spacing">Gusts (mph)</text>
<rect x="521.8" y="291.5" width="72.20000000000005" height="7.3" fill="#990099" stroke="#000" stroke-width="0.7"/>
<text x="557.90" y="297.30" class="lg" text-anchor="middle" textLength="66.2" lengthAdjust="spacing">Surface Wind (mph)</text>
<path d="M63.80 419.73 C65.64 420.29 71.18 421.96 74.87 423.08 C78.56 424.20 82.25 425.20 85.94 426.43 C89.63 427.66 93.31 429.22 97.00 430.45 C100.69 431.68 104.38 432.68 108.07 433.80 C111.76 434.92 115.45 436.26 119.14 437.15 C122.83 438.04 126.52 438.60 130.21 439.16 C133.90 439.72 137.59 440.50 141.28 440.50 C144.97 440.50 148.65 440.05 152.34 439.16 C156.03 438.27 159.72 436.59 163.41 435.14 C167.10 433.69 170.79 432.01 174.48 430.45 C178.17 428.89 181.86 426.88 185.55 425.76 C189.24 424.64 192.93 424.20 196.62 423.75 C200.31 423.30 203.99 422.97 207.68 423.08 C211.37 423.19 215.06 424.20 218.75 424.42 C222.44 424.64 226.13 424.31 229.82 424.42 C233.51 424.53 237.20 424.76 240.89 425.09 C244.58 425.43 248.27 425.76 251.96 426.43 C255.65 427.10 259.33 428.22 263.02 429.11 C266.71 430.00 270.40 431.12 274.09 431.79 C277.78 432.46 281.47 433.13 285.16 433.13 C288.85 433.13 292.54 432.24 296.23 431.79 C299.92 431.34 303.61 430.78 307.30 430.45 C310.99 430.12 314.67 429.78 318.36 429.78 C322.05 429.78 325.74 429.78 329.43 430.45 C333.12 431.12 336.81 432.80 340.50 433.80 C344.19 434.81 347.88 435.70 351.57 436.48 C355.26 437.26 358.95 438.04 362.64 438.49 C366.33 438.94 370.01 438.94 373.70 439.16 C377.39 439.38 381.08 439.50 384.77 439.83 C388.46 440.16 392.15 440.95 395.84 441.17 C399.53 441.39 403.22 441.50 406.91 441.17 C410.60 440.84 414.29 440.17 417.98 439.16 C421.67 438.16 425.35 436.81 429.04 435.14 C432.73 433.46 436.42 430.56 440.11 429.11 C443.80 427.66 447.49 426.76 451.18 426.43 C454.87 426.10 458.56 426.65 462.25 427.10 C465.94 427.55 469.63 428.44 473.32 429.11 C477.01 429.78 480.69 430.79 484.38 431.12 C488.07 431.45 491.76 431.57 495.45 431.12 C499.14 430.67 502.83 428.89 506.52 428.44 C510.21 427.99 513.90 428.22 517.59 428.44 C521.28 428.66 524.97 429.22 528.66 429.78 C532.35 430.34 536.03 431.23 539.72 431.79 C543.41 432.35 547.10 433.24 550.79 433.13 C554.48 433.02 558.17 431.79 561.86 431.12 C565.55 430.45 569.24 429.56 572.93 429.11 C576.62 428.66 582.15 428.55 584.00 428.44" fill="none" stroke="#3a9a3a" stroke-width="1.15"/>
<path d="M63.80 467.30 L74.87 467.30 L85.94 467.30 L97.00 467.30 L108.07 467.30 L119.14 467.30 L130.21 467.30 L141.28 467.30 L152.34 467.30 L163.41 467.30 L174.48 467.30 L185.55 467.30 L196.62 467.30 L207.68 467.30 L218.75 467.30 L229.82 467.30 L240.89 467.30 L251.96 467.30 L263.02 467.30 L274.09 467.30 L285.16 467.30 L296.23 467.30 L307.30 467.30 L318.36 467.30 L329.43 467.30 L340.50 467.30 L351.57 467.30 L362.64 467.30 L373.70 467.30 L384.77 467.30 L395.84 467.30 L406.91 467.30 L417.98 467.30 L429.04 467.30 L440.11 467.30 L451.18 467.30 L462.25 467.30 L473.32 467.30 L484.38 467.30 L495.45 467.30 L506.52 467.30 L517.59 467.30 L528.66 467.30 L539.72 467.30 L550.79 467.30 L561.86 467.30 L572.93 467.30 L584.00 467.30" fill="none" stroke="#c89060" stroke-width="1.0"/>
<path d="M63.80 467.30 C65.64 467.30 71.18 467.30 74.87 467.30 C78.56 467.30 82.25 467.30 85.94 467.30 C89.63 467.30 93.31 467.30 97.00 467.30 C100.69 467.30 104.38 467.52 108.07 467.30 C111.76 467.08 115.45 466.18 119.14 465.96 C122.83 465.74 126.52 465.96 130.21 465.96 C133.90 465.96 137.59 466.07 141.28 465.96 C144.97 465.85 148.65 465.40 152.34 465.29 C156.03 465.18 159.72 465.29 163.41 465.29 C167.10 465.29 170.79 465.29 174.48 465.29 C178.17 465.29 181.86 465.18 185.55 465.29 C189.24 465.40 192.93 465.85 196.62 465.96 C200.31 466.07 203.99 465.96 207.68 465.96 C211.37 465.96 215.06 465.96 218.75 465.96 C222.44 465.96 226.13 465.96 229.82 465.96 C233.51 465.96 237.20 465.96 240.89 465.96 C244.58 465.96 248.27 465.96 251.96 465.96 C255.65 465.96 259.33 465.96 263.02 465.96 C266.71 465.96 270.40 465.96 274.09 465.96 C277.78 465.96 281.47 465.96 285.16 465.96 C288.85 465.96 292.54 465.96 296.23 465.96 C299.92 465.96 303.61 465.96 307.30 465.96 C310.99 465.96 314.67 465.96 318.36 465.96 C322.05 465.96 325.74 465.96 329.43 465.96 C333.12 465.96 336.81 466.18 340.50 465.96 C344.19 465.74 347.88 464.84 351.57 464.62 C355.26 464.40 358.95 464.62 362.64 464.62 C366.33 464.62 370.01 464.40 373.70 464.62 C377.39 464.84 381.08 465.74 384.77 465.96 C388.46 466.18 392.15 465.96 395.84 465.96 C399.53 465.96 403.22 466.18 406.91 465.96 C410.60 465.74 414.29 464.84 417.98 464.62 C421.67 464.40 425.35 464.62 429.04 464.62 C432.73 464.62 436.42 464.73 440.11 464.62 C443.80 464.51 447.49 464.06 451.18 463.95 C454.87 463.84 458.56 463.95 462.25 463.95 C465.94 463.95 469.63 463.95 473.32 463.95 C477.01 463.95 480.69 463.95 484.38 463.95 C488.07 463.95 491.76 463.95 495.45 463.95 C499.14 463.95 502.83 464.40 506.52 463.95 C510.21 463.50 513.90 461.72 517.59 461.27 C521.28 460.82 524.97 461.27 528.66 461.27 C532.35 461.27 536.03 461.16 539.72 461.27 C543.41 461.38 547.10 461.83 550.79 461.94 C554.48 462.05 558.17 461.94 561.86 461.94 C565.55 461.94 569.24 462.50 572.93 461.94 C576.62 461.38 582.15 459.15 584.00 458.59" fill="none" stroke="#3030ff" stroke-width="1.15"/>
<circle cx="63.80" cy="419.73" r="1.15" fill="#111"/><circle cx="74.87" cy="423.08" r="1.15" fill="#111"/><circle cx="85.94" cy="426.43" r="1.15" fill="#111"/><circle cx="97.00" cy="430.45" r="1.15" fill="#111"/><circle cx="108.07" cy="433.80" r="1.15" fill="#111"/><circle cx="119.14" cy="437.15" r="1.15" fill="#111"/><circle cx="130.21" cy="439.16" r="1.15" fill="#111"/><circle cx="141.28" cy="440.50" r="1.15" fill="#111"/><circle cx="152.34" cy="439.16" r="1.15" fill="#111"/><circle cx="163.41" cy="435.14" r="1.15" fill="#111"/><circle cx="174.48" cy="430.45" r="1.15" fill="#111"/><circle cx="185.55" cy="425.76" r="1.15" fill="#111"/><circle cx="196.62" cy="423.75" r="1.15" fill="#111"/><circle cx="207.68" cy="423.08" r="1.15" fill="#111"/><circle cx="218.75" cy="424.42" r="1.15" fill="#111"/><circle cx="229.82" cy="424.42" r="1.15" fill="#111"/><circle cx="240.89" cy="425.09" r="1.15" fill="#111"/><circle cx="251.96" cy="426.43" r="1.15" fill="#111"/><circle cx="263.02" cy="429.11" r="1.15" fill="#111"/><circle cx="274.09" cy="431.79" r="1.15" fill="#111"/><circle cx="285.16" cy="433.13" r="1.15" fill="#111"/><circle cx="296.23" cy="431.79" r="1.15" fill="#111"/><circle cx="307.30" cy="430.45" r="1.15" fill="#111"/><circle cx="318.36" cy="429.78" r="1.15" fill="#111"/><circle cx="329.43" cy="430.45" r="1.15" fill="#111"/><circle cx="340.50" cy="433.80" r="1.15" fill="#111"/><circle cx="351.57" cy="436.48" r="1.15" fill="#111"/><circle cx="362.64" cy="438.49" r="1.15" fill="#111"/><circle cx="373.70" cy="439.16" r="1.15" fill="#111"/><circle cx="384.77" cy="439.83" r="1.15" fill="#111"/><circle cx="395.84" cy="441.17" r="1.15" fill="#111"/><circle cx="406.91" cy="441.17" r="1.15" fill="#111"/><circle cx="417.98" cy="439.16" r="1.15" fill="#111"/><circle cx="429.04" cy="435.14" r="1.15" fill="#111"/><circle cx="440.11" cy="429.11" r="1.15" fill="#111"/><circle cx="451.18" cy="426.43" r="1.15" fill="#111"/><circle cx="462.25" cy="427.10" r="1.15" fill="#111"/><circle cx="473.32" cy="429.11" r="1.15" fill="#111"/><circle cx="484.38" cy="431.12" r="1.15" fill="#111"/><circle cx="495.45" cy="431.12" r="1.15" fill="#111"/><circle cx="506.52" cy="428.44" r="1.15" fill="#111"/><circle cx="517.59" cy="428.44" r="1.15" fill="#111"/><circle cx="528.66" cy="429.78" r="1.15" fill="#111"/><circle cx="539.72" cy="431.79" r="1.15" fill="#111"/><circle cx="550.79" cy="433.13" r="1.15" fill="#111"/><circle cx="561.86" cy="431.12" r="1.15" fill="#111"/><circle cx="572.93" cy="429.11" r="1.15" fill="#111"/><circle cx="584.00" cy="428.44" r="1.15" fill="#111"/>
<circle cx="63.80" cy="467.30" r="1.15" fill="#111"/><circle cx="74.87" cy="467.30" r="1.15" fill="#111"/><circle cx="85.94" cy="467.30" r="1.15" fill="#111"/><circle cx="97.00" cy="467.30" r="1.15" fill="#111"/><circle cx="108.07" cy="467.30" r="1.15" fill="#111"/><circle cx="119.14" cy="467.30" r="1.15" fill="#111"/><circle cx="130.21" cy="467.30" r="1.15" fill="#111"/><circle cx="141.28" cy="467.30" r="1.15" fill="#111"/><circle cx="152.34" cy="467.30" r="1.15" fill="#111"/><circle cx="163.41" cy="467.30" r="1.15" fill="#111"/><circle cx="174.48" cy="467.30" r="1.15" fill="#111"/><circle cx="185.55" cy="467.30" r="1.15" fill="#111"/><circle cx="196.62" cy="467.30" r="1.15" fill="#111"/><circle cx="207.68" cy="467.30" r="1.15" fill="#111"/><circle cx="218.75" cy="467.30" r="1.15" fill="#111"/><circle cx="229.82" cy="467.30" r="1.15" fill="#111"/><circle cx="240.89" cy="467.30" r="1.15" fill="#111"/><circle cx="251.96" cy="467.30" r="1.15" fill="#111"/><circle cx="263.02" cy="467.30" r="1.15" fill="#111"/><circle cx="274.09" cy="467.30" r="1.15" fill="#111"/><circle cx="285.16" cy="467.30" r="1.15" fill="#111"/><circle cx="296.23" cy="467.30" r="1.15" fill="#111"/><circle cx="307.30" cy="467.30" r="1.15" fill="#111"/><circle cx="318.36" cy="467.30" r="1.15" fill="#111"/><circle cx="329.43" cy="467.30" r="1.15" fill="#111"/><circle cx="340.50" cy="467.30" r="1.15" fill="#111"/><circle cx="351.57" cy="467.30" r="1.15" fill="#111"/><circle cx="362.64" cy="467.30" r="1.15" fill="#111"/><circle cx="373.70" cy="467.30" r="1.15" fill="#111"/><circle cx="384.77" cy="467.30" r="1.15" fill="#111"/><circle cx="395.84" cy="467.30" r="1.15" fill="#111"/><circle cx="406.91" cy="467.30" r="1.15" fill="#111"/><circle cx="417.98" cy="467.30" r="1.15" fill="#111"/><circle cx="429.04" cy="467.30" r="1.15" fill="#111"/><circle cx="440.11" cy="467.30" r="1.15" fill="#111"/><circle cx="451.18" cy="467.30" r="1.15" fill="#111"/><circle cx="462.25" cy="467.30" r="1.15" fill="#111"/><circle cx="473.32" cy="467.30" r="1.15" fill="#111"/><circle cx="484.38" cy="467.30" r="1.15" fill="#111"/><circle cx="495.45" cy="467.30" r="1.15" fill="#111"/><circle cx="506.52" cy="467.30" r="1.15" fill="#111"/><circle cx="517.59" cy="467.30" r="1.15" fill="#111"/><circle cx="528.66" cy="467.30" r="1.15" fill="#111"/><circle cx="539.72" cy="467.30" r="1.15" fill="#111"/><circle cx="550.79" cy="467.30" r="1.15" fill="#111"/><circle cx="561.86" cy="467.30" r="1.15" fill="#111"/><circle cx="572.93" cy="467.30" r="1.15" fill="#111"/><circle cx="584.00" cy="467.30" r="1.15" fill="#111"/>
<circle cx="63.80" cy="467.30" r="1.15" fill="#111"/><circle cx="74.87" cy="467.30" r="1.15" fill="#111"/><circle cx="85.94" cy="467.30" r="1.15" fill="#111"/><circle cx="97.00" cy="467.30" r="1.15" fill="#111"/><circle cx="108.07" cy="467.30" r="1.15" fill="#111"/><circle cx="119.14" cy="465.96" r="1.15" fill="#111"/><circle cx="130.21" cy="465.96" r="1.15" fill="#111"/><circle cx="141.28" cy="465.96" r="1.15" fill="#111"/><circle cx="152.34" cy="465.29" r="1.15" fill="#111"/><circle cx="163.41" cy="465.29" r="1.15" fill="#111"/><circle cx="174.48" cy="465.29" r="1.15" fill="#111"/><circle cx="185.55" cy="465.29" r="1.15" fill="#111"/><circle cx="196.62" cy="465.96" r="1.15" fill="#111"/><circle cx="207.68" cy="465.96" r="1.15" fill="#111"/><circle cx="218.75" cy="465.96" r="1.15" fill="#111"/><circle cx="229.82" cy="465.96" r="1.15" fill="#111"/><circle cx="240.89" cy="465.96" r="1.15" fill="#111"/><circle cx="251.96" cy="465.96" r="1.15" fill="#111"/><circle cx="263.02" cy="465.96" r="1.15" fill="#111"/><circle cx="274.09" cy="465.96" r="1.15" fill="#111"/><circle cx="285.16" cy="465.96" r="1.15" fill="#111"/><circle cx="296.23" cy="465.96" r="1.15" fill="#111"/><circle cx="307.30" cy="465.96" r="1.15" fill="#111"/><circle cx="318.36" cy="465.96" r="1.15" fill="#111"/><circle cx="329.43" cy="465.96" r="1.15" fill="#111"/><circle cx="340.50" cy="465.96" r="1.15" fill="#111"/><circle cx="351.57" cy="464.62" r="1.15" fill="#111"/><circle cx="362.64" cy="464.62" r="1.15" fill="#111"/><circle cx="373.70" cy="464.62" r="1.15" fill="#111"/><circle cx="384.77" cy="465.96" r="1.15" fill="#111"/><circle cx="395.84" cy="465.96" r="1.15" fill="#111"/><circle cx="406.91" cy="465.96" r="1.15" fill="#111"/><circle cx="417.98" cy="464.62" r="1.15" fill="#111"/><circle cx="429.04" cy="464.62" r="1.15" fill="#111"/><circle cx="440.11" cy="464.62" r="1.15" fill="#111"/><circle cx="451.18" cy="463.95" r="1.15" fill="#111"/><circle cx="462.25" cy="463.95" r="1.15" fill="#111"/><circle cx="473.32" cy="463.95" r="1.15" fill="#111"/><circle cx="484.38" cy="463.95" r="1.15" fill="#111"/><circle cx="495.45" cy="463.95" r="1.15" fill="#111"/><circle cx="506.52" cy="463.95" r="1.15" fill="#111"/><circle cx="517.59" cy="461.27" r="1.15" fill="#111"/><circle cx="528.66" cy="461.27" r="1.15" fill="#111"/><circle cx="539.72" cy="461.27" r="1.15" fill="#111"/><circle cx="550.79" cy="461.94" r="1.15" fill="#111"/><circle cx="561.86" cy="461.94" r="1.15" fill="#111"/><circle cx="572.93" cy="461.94" r="1.15" fill="#111"/><circle cx="584.00" cy="458.59" r="1.15" fill="#111"/>
<text x="85.94" y="425.03" class="vl" text-anchor="middle" fill="#2a8a2a">61%</text>
<text x="85.44" y="465.10" class="vl" text-anchor="middle" fill="#c08050">0%</text>
<text x="86.44" y="464.70" class="vl" text-anchor="middle" fill="#3030e0">0%</text>
<text x="119.14" y="435.75" class="vl" text-anchor="middle" fill="#2a8a2a">45%</text>
<text x="118.64" y="465.10" class="vl" text-anchor="middle" fill="#c08050">0%</text>
<text x="119.64" y="463.36" class="vl" text-anchor="middle" fill="#3030e0">2%</text>
<text x="152.34" y="437.76" class="vl" text-anchor="middle" fill="#2a8a2a">42%</text>
<text x="151.84" y="465.10" class="vl" text-anchor="middle" fill="#c08050">0%</text>
<text x="152.84" y="462.69" class="vl" text-anchor="middle" fill="#3030e0">3%</text>
<text x="185.55" y="424.36" class="vl" text-anchor="middle" fill="#2a8a2a">62%</text>
<text x="185.05" y="465.10" class="vl" text-anchor="middle" fill="#c08050">0%</text>
<text x="186.05" y="462.69" class="vl" text-anchor="middle" fill="#3030e0">3%</text>
<text x="218.75" y="423.02" class="vl" text-anchor="middle" fill="#2a8a2a">64%</text>
<text x="218.25" y="465.10" class="vl" text-anchor="middle" fill="#c08050">0%</text>
<text x="219.25" y="463.36" class="vl" text-anchor="middle" fill="#3030e0">2%</text>
<text x="251.96" y="425.03" class="vl" text-anchor="middle" fill="#2a8a2a">61%</text>
<text x="251.46" y="465.10" class="vl" text-anchor="middle" fill="#c08050">0%</text>
<text x="252.46" y="463.36" class="vl" text-anchor="middle" fill="#3030e0">2%</text>
<text x="285.16" y="431.73" class="vl" text-anchor="middle" fill="#2a8a2a">51%</text>
<text x="284.66" y="465.10" class="vl" text-anchor="middle" fill="#c08050">0%</text>
<text x="285.66" y="463.36" class="vl" text-anchor="middle" fill="#3030e0">2%</text>
<text x="318.36" y="428.38" class="vl" text-anchor="middle" fill="#2a8a2a">56%</text>
<text x="317.86" y="465.10" class="vl" text-anchor="middle" fill="#c08050">0%</text>
<text x="318.86" y="463.36" class="vl" text-anchor="middle" fill="#3030e0">2%</text>
<text x="351.57" y="435.08" class="vl" text-anchor="middle" fill="#2a8a2a">46%</text>
<text x="351.07" y="465.10" class="vl" text-anchor="middle" fill="#c08050">0%</text>
<text x="352.07" y="462.02" class="vl" text-anchor="middle" fill="#3030e0">4%</text>
<text x="384.77" y="438.43" class="vl" text-anchor="middle" fill="#2a8a2a">41%</text>
<text x="384.27" y="465.10" class="vl" text-anchor="middle" fill="#c08050">0%</text>
<text x="385.27" y="463.36" class="vl" text-anchor="middle" fill="#3030e0">2%</text>
<text x="417.98" y="437.76" class="vl" text-anchor="middle" fill="#2a8a2a">42%</text>
<text x="417.48" y="465.10" class="vl" text-anchor="middle" fill="#c08050">0%</text>
<text x="418.48" y="462.02" class="vl" text-anchor="middle" fill="#3030e0">4%</text>
<text x="451.18" y="425.03" class="vl" text-anchor="middle" fill="#2a8a2a">61%</text>
<text x="450.68" y="465.10" class="vl" text-anchor="middle" fill="#c08050">0%</text>
<text x="451.68" y="461.35" class="vl" text-anchor="middle" fill="#3030e0">5%</text>
<text x="484.38" y="429.72" class="vl" text-anchor="middle" fill="#2a8a2a">54%</text>
<text x="483.88" y="465.10" class="vl" text-anchor="middle" fill="#c08050">0%</text>
<text x="484.88" y="461.35" class="vl" text-anchor="middle" fill="#3030e0">5%</text>
<text x="517.59" y="427.04" class="vl" text-anchor="middle" fill="#2a8a2a">58%</text>
<text x="517.09" y="465.10" class="vl" text-anchor="middle" fill="#c08050">0%</text>
<text x="518.09" y="458.67" class="vl" text-anchor="middle" fill="#3030e0">9%</text>
<text x="550.79" y="431.73" class="vl" text-anchor="middle" fill="#2a8a2a">51%</text>
<text x="550.29" y="465.10" class="vl" text-anchor="middle" fill="#c08050">0%</text>
<text x="551.29" y="459.34" class="vl" text-anchor="middle" fill="#3030e0">8%</text>
<text x="584.00" y="427.04" class="vl" text-anchor="middle" fill="#2a8a2a">58%</text>
<text x="583.50" y="465.10" class="vl" text-anchor="middle" fill="#c08050">0%</text>
<text x="584.50" y="455.99" class="vl" text-anchor="middle" fill="#3030e0">13%</text>
<rect x="367.0" y="386.1" width="76.60000000000002" height="7.3" fill="#006600" stroke="#000" stroke-width="0.7"/>
<text x="405.30" y="391.90" class="lg" text-anchor="middle" textLength="70.6" lengthAdjust="spacing">Relative Humidity (%)</text>
<rect x="443.6" y="386.1" width="98.0" height="7.3" fill="#a66c38" stroke="#000" stroke-width="0.7"/>
<text x="492.60" y="391.90" class="lg" text-anchor="middle" textLength="92.0" lengthAdjust="spacing">Precipitation Potential (%)</text>
<rect x="541.6" y="386.1" width="51.89999999999998" height="7.3" fill="#0000cc" stroke="#000" stroke-width="0.7"/>
<text x="567.55" y="391.90" class="lg" text-anchor="middle" textLength="45.9" lengthAdjust="spacing">Sky Cover (%)</text>
<rect x="573.3" y="481.3" width="20.700000000000045" height="8" fill="#008a00" stroke="#000" stroke-width="0.7"/>
<text x="583.65" y="487.80" class="lg" text-anchor="middle" textLength="14.7" lengthAdjust="spacing">Rain</text>
<line x1="52.6" y1="290.90" x2="594.0" y2="290.90" stroke="#000" stroke-width="1.5"/>
<line x1="52.6" y1="385.70" x2="594.0" y2="385.70" stroke="#000" stroke-width="1.5"/>
<line x1="52.6" y1="480.70" x2="594.0" y2="480.70" stroke="#000" stroke-width="1.5"/>
<path d="M52.6 487 L52.6 196.7 L594.0 196.7 L594.0 487" fill="none" stroke="#444" stroke-width="1.1"/>
</svg>
</body></html>
